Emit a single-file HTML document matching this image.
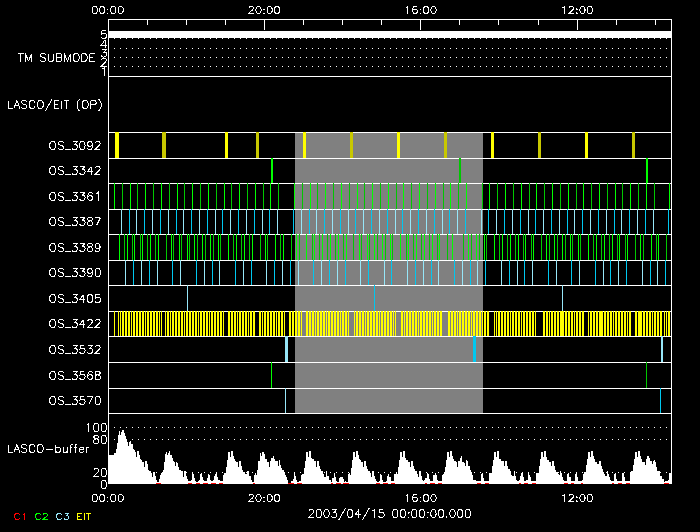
<!DOCTYPE html>
<html><head><meta charset="utf-8"><style>html,body{margin:0;padding:0;background:#000;width:700px;height:532px;overflow:hidden}svg{display:block}</style></head>
<body><svg width="700" height="532" viewBox="0 0 700 532" shape-rendering="crispEdges"><rect width="700" height="532" fill="#000"/><rect x="295" y="133" width="188" height="280" fill="#808080"/><rect x="108" y="31" width="564" height="7" fill="#ffffff"/><rect x="108" y="19" width="564" height="1" fill="#ffffff"/><rect x="108" y="76" width="564" height="1" fill="#ffffff"/><rect x="108" y="132" width="564" height="1" fill="#ffffff"/><rect x="108" y="158" width="564" height="1" fill="#ffffff"/><rect x="108" y="183" width="564" height="1" fill="#ffffff"/><rect x="108" y="209" width="564" height="1" fill="#ffffff"/><rect x="108" y="234" width="564" height="1" fill="#ffffff"/><rect x="108" y="260" width="564" height="1" fill="#ffffff"/><rect x="108" y="285" width="564" height="1" fill="#ffffff"/><rect x="108" y="311" width="564" height="1" fill="#ffffff"/><rect x="108" y="336" width="564" height="1" fill="#ffffff"/><rect x="108" y="362" width="564" height="1" fill="#ffffff"/><rect x="108" y="388" width="564" height="1" fill="#ffffff"/><rect x="108" y="413" width="564" height="1" fill="#ffffff"/><rect x="108" y="19" width="1" height="465" fill="#ffffff"/><rect x="671" y="19" width="1" height="465" fill="#ffffff"/><rect x="147" y="20" width="1" height="5" fill="#ffffff"/><rect x="186" y="20" width="1" height="5" fill="#ffffff"/><rect x="225" y="20" width="1" height="5" fill="#ffffff"/><rect x="264" y="20" width="1" height="10" fill="#ffffff"/><rect x="303" y="20" width="1" height="5" fill="#ffffff"/><rect x="342" y="20" width="1" height="5" fill="#ffffff"/><rect x="381" y="20" width="1" height="5" fill="#ffffff"/><rect x="420" y="20" width="1" height="10" fill="#ffffff"/><rect x="459" y="20" width="1" height="5" fill="#ffffff"/><rect x="498" y="20" width="1" height="5" fill="#ffffff"/><rect x="538" y="20" width="1" height="5" fill="#ffffff"/><rect x="577" y="20" width="1" height="10" fill="#ffffff"/><rect x="616" y="20" width="1" height="5" fill="#ffffff"/><rect x="655" y="20" width="1" height="5" fill="#ffffff"/><rect x="114" y="38" width="1" height="1" fill="#ffffff"/><rect x="120" y="38" width="1" height="1" fill="#ffffff"/><rect x="126" y="38" width="1" height="1" fill="#ffffff"/><rect x="132" y="38" width="1" height="1" fill="#ffffff"/><rect x="138" y="38" width="1" height="1" fill="#ffffff"/><rect x="144" y="38" width="1" height="1" fill="#ffffff"/><rect x="150" y="38" width="1" height="1" fill="#ffffff"/><rect x="156" y="38" width="1" height="1" fill="#ffffff"/><rect x="162" y="38" width="1" height="1" fill="#ffffff"/><rect x="168" y="38" width="1" height="1" fill="#ffffff"/><rect x="174" y="38" width="1" height="1" fill="#ffffff"/><rect x="180" y="38" width="1" height="1" fill="#ffffff"/><rect x="186" y="38" width="1" height="1" fill="#ffffff"/><rect x="192" y="38" width="1" height="1" fill="#ffffff"/><rect x="198" y="38" width="1" height="1" fill="#ffffff"/><rect x="204" y="38" width="1" height="1" fill="#ffffff"/><rect x="210" y="38" width="1" height="1" fill="#ffffff"/><rect x="216" y="38" width="1" height="1" fill="#ffffff"/><rect x="222" y="38" width="1" height="1" fill="#ffffff"/><rect x="228" y="38" width="1" height="1" fill="#ffffff"/><rect x="234" y="38" width="1" height="1" fill="#ffffff"/><rect x="240" y="38" width="1" height="1" fill="#ffffff"/><rect x="246" y="38" width="1" height="1" fill="#ffffff"/><rect x="252" y="38" width="1" height="1" fill="#ffffff"/><rect x="258" y="38" width="1" height="1" fill="#ffffff"/><rect x="264" y="38" width="1" height="1" fill="#ffffff"/><rect x="270" y="38" width="1" height="1" fill="#ffffff"/><rect x="276" y="38" width="1" height="1" fill="#ffffff"/><rect x="282" y="38" width="1" height="1" fill="#ffffff"/><rect x="288" y="38" width="1" height="1" fill="#ffffff"/><rect x="294" y="38" width="1" height="1" fill="#ffffff"/><rect x="300" y="38" width="1" height="1" fill="#ffffff"/><rect x="306" y="38" width="1" height="1" fill="#ffffff"/><rect x="312" y="38" width="1" height="1" fill="#ffffff"/><rect x="318" y="38" width="1" height="1" fill="#ffffff"/><rect x="324" y="38" width="1" height="1" fill="#ffffff"/><rect x="330" y="38" width="1" height="1" fill="#ffffff"/><rect x="336" y="38" width="1" height="1" fill="#ffffff"/><rect x="342" y="38" width="1" height="1" fill="#ffffff"/><rect x="348" y="38" width="1" height="1" fill="#ffffff"/><rect x="354" y="38" width="1" height="1" fill="#ffffff"/><rect x="360" y="38" width="1" height="1" fill="#ffffff"/><rect x="366" y="38" width="1" height="1" fill="#ffffff"/><rect x="372" y="38" width="1" height="1" fill="#ffffff"/><rect x="378" y="38" width="1" height="1" fill="#ffffff"/><rect x="384" y="38" width="1" height="1" fill="#ffffff"/><rect x="390" y="38" width="1" height="1" fill="#ffffff"/><rect x="396" y="38" width="1" height="1" fill="#ffffff"/><rect x="402" y="38" width="1" height="1" fill="#ffffff"/><rect x="408" y="38" width="1" height="1" fill="#ffffff"/><rect x="414" y="38" width="1" height="1" fill="#ffffff"/><rect x="420" y="38" width="1" height="1" fill="#ffffff"/><rect x="426" y="38" width="1" height="1" fill="#ffffff"/><rect x="432" y="38" width="1" height="1" fill="#ffffff"/><rect x="438" y="38" width="1" height="1" fill="#ffffff"/><rect x="444" y="38" width="1" height="1" fill="#ffffff"/><rect x="450" y="38" width="1" height="1" fill="#ffffff"/><rect x="456" y="38" width="1" height="1" fill="#ffffff"/><rect x="462" y="38" width="1" height="1" fill="#ffffff"/><rect x="468" y="38" width="1" height="1" fill="#ffffff"/><rect x="474" y="38" width="1" height="1" fill="#ffffff"/><rect x="480" y="38" width="1" height="1" fill="#ffffff"/><rect x="486" y="38" width="1" height="1" fill="#ffffff"/><rect x="492" y="38" width="1" height="1" fill="#ffffff"/><rect x="498" y="38" width="1" height="1" fill="#ffffff"/><rect x="504" y="38" width="1" height="1" fill="#ffffff"/><rect x="510" y="38" width="1" height="1" fill="#ffffff"/><rect x="516" y="38" width="1" height="1" fill="#ffffff"/><rect x="522" y="38" width="1" height="1" fill="#ffffff"/><rect x="528" y="38" width="1" height="1" fill="#ffffff"/><rect x="534" y="38" width="1" height="1" fill="#ffffff"/><rect x="540" y="38" width="1" height="1" fill="#ffffff"/><rect x="546" y="38" width="1" height="1" fill="#ffffff"/><rect x="552" y="38" width="1" height="1" fill="#ffffff"/><rect x="558" y="38" width="1" height="1" fill="#ffffff"/><rect x="564" y="38" width="1" height="1" fill="#ffffff"/><rect x="570" y="38" width="1" height="1" fill="#ffffff"/><rect x="576" y="38" width="1" height="1" fill="#ffffff"/><rect x="582" y="38" width="1" height="1" fill="#ffffff"/><rect x="588" y="38" width="1" height="1" fill="#ffffff"/><rect x="594" y="38" width="1" height="1" fill="#ffffff"/><rect x="600" y="38" width="1" height="1" fill="#ffffff"/><rect x="606" y="38" width="1" height="1" fill="#ffffff"/><rect x="612" y="38" width="1" height="1" fill="#ffffff"/><rect x="618" y="38" width="1" height="1" fill="#ffffff"/><rect x="624" y="38" width="1" height="1" fill="#ffffff"/><rect x="630" y="38" width="1" height="1" fill="#ffffff"/><rect x="636" y="38" width="1" height="1" fill="#ffffff"/><rect x="642" y="38" width="1" height="1" fill="#ffffff"/><rect x="648" y="38" width="1" height="1" fill="#ffffff"/><rect x="654" y="38" width="1" height="1" fill="#ffffff"/><rect x="660" y="38" width="1" height="1" fill="#ffffff"/><rect x="666" y="38" width="1" height="1" fill="#ffffff"/><rect x="114" y="48" width="1" height="1" fill="#ffffff"/><rect x="120" y="48" width="1" height="1" fill="#ffffff"/><rect x="126" y="48" width="1" height="1" fill="#ffffff"/><rect x="132" y="48" width="1" height="1" fill="#ffffff"/><rect x="138" y="48" width="1" height="1" fill="#ffffff"/><rect x="144" y="48" width="1" height="1" fill="#ffffff"/><rect x="150" y="48" width="1" height="1" fill="#ffffff"/><rect x="156" y="48" width="1" height="1" fill="#ffffff"/><rect x="162" y="48" width="1" height="1" fill="#ffffff"/><rect x="168" y="48" width="1" height="1" fill="#ffffff"/><rect x="174" y="48" width="1" height="1" fill="#ffffff"/><rect x="180" y="48" width="1" height="1" fill="#ffffff"/><rect x="186" y="48" width="1" height="1" fill="#ffffff"/><rect x="192" y="48" width="1" height="1" fill="#ffffff"/><rect x="198" y="48" width="1" height="1" fill="#ffffff"/><rect x="204" y="48" width="1" height="1" fill="#ffffff"/><rect x="210" y="48" width="1" height="1" fill="#ffffff"/><rect x="216" y="48" width="1" height="1" fill="#ffffff"/><rect x="222" y="48" width="1" height="1" fill="#ffffff"/><rect x="228" y="48" width="1" height="1" fill="#ffffff"/><rect x="234" y="48" width="1" height="1" fill="#ffffff"/><rect x="240" y="48" width="1" height="1" fill="#ffffff"/><rect x="246" y="48" width="1" height="1" fill="#ffffff"/><rect x="252" y="48" width="1" height="1" fill="#ffffff"/><rect x="258" y="48" width="1" height="1" fill="#ffffff"/><rect x="264" y="48" width="1" height="1" fill="#ffffff"/><rect x="270" y="48" width="1" height="1" fill="#ffffff"/><rect x="276" y="48" width="1" height="1" fill="#ffffff"/><rect x="282" y="48" width="1" height="1" fill="#ffffff"/><rect x="288" y="48" width="1" height="1" fill="#ffffff"/><rect x="294" y="48" width="1" height="1" fill="#ffffff"/><rect x="300" y="48" width="1" height="1" fill="#ffffff"/><rect x="306" y="48" width="1" height="1" fill="#ffffff"/><rect x="312" y="48" width="1" height="1" fill="#ffffff"/><rect x="318" y="48" width="1" height="1" fill="#ffffff"/><rect x="324" y="48" width="1" height="1" fill="#ffffff"/><rect x="330" y="48" width="1" height="1" fill="#ffffff"/><rect x="336" y="48" width="1" height="1" fill="#ffffff"/><rect x="342" y="48" width="1" height="1" fill="#ffffff"/><rect x="348" y="48" width="1" height="1" fill="#ffffff"/><rect x="354" y="48" width="1" height="1" fill="#ffffff"/><rect x="360" y="48" width="1" height="1" fill="#ffffff"/><rect x="366" y="48" width="1" height="1" fill="#ffffff"/><rect x="372" y="48" width="1" height="1" fill="#ffffff"/><rect x="378" y="48" width="1" height="1" fill="#ffffff"/><rect x="384" y="48" width="1" height="1" fill="#ffffff"/><rect x="390" y="48" width="1" height="1" fill="#ffffff"/><rect x="396" y="48" width="1" height="1" fill="#ffffff"/><rect x="402" y="48" width="1" height="1" fill="#ffffff"/><rect x="408" y="48" width="1" height="1" fill="#ffffff"/><rect x="414" y="48" width="1" height="1" fill="#ffffff"/><rect x="420" y="48" width="1" height="1" fill="#ffffff"/><rect x="426" y="48" width="1" height="1" fill="#ffffff"/><rect x="432" y="48" width="1" height="1" fill="#ffffff"/><rect x="438" y="48" width="1" height="1" fill="#ffffff"/><rect x="444" y="48" width="1" height="1" fill="#ffffff"/><rect x="450" y="48" width="1" height="1" fill="#ffffff"/><rect x="456" y="48" width="1" height="1" fill="#ffffff"/><rect x="462" y="48" width="1" height="1" fill="#ffffff"/><rect x="468" y="48" width="1" height="1" fill="#ffffff"/><rect x="474" y="48" width="1" height="1" fill="#ffffff"/><rect x="480" y="48" width="1" height="1" fill="#ffffff"/><rect x="486" y="48" width="1" height="1" fill="#ffffff"/><rect x="492" y="48" width="1" height="1" fill="#ffffff"/><rect x="498" y="48" width="1" height="1" fill="#ffffff"/><rect x="504" y="48" width="1" height="1" fill="#ffffff"/><rect x="510" y="48" width="1" height="1" fill="#ffffff"/><rect x="516" y="48" width="1" height="1" fill="#ffffff"/><rect x="522" y="48" width="1" height="1" fill="#ffffff"/><rect x="528" y="48" width="1" height="1" fill="#ffffff"/><rect x="534" y="48" width="1" height="1" fill="#ffffff"/><rect x="540" y="48" width="1" height="1" fill="#ffffff"/><rect x="546" y="48" width="1" height="1" fill="#ffffff"/><rect x="552" y="48" width="1" height="1" fill="#ffffff"/><rect x="558" y="48" width="1" height="1" fill="#ffffff"/><rect x="564" y="48" width="1" height="1" fill="#ffffff"/><rect x="570" y="48" width="1" height="1" fill="#ffffff"/><rect x="576" y="48" width="1" height="1" fill="#ffffff"/><rect x="582" y="48" width="1" height="1" fill="#ffffff"/><rect x="588" y="48" width="1" height="1" fill="#ffffff"/><rect x="594" y="48" width="1" height="1" fill="#ffffff"/><rect x="600" y="48" width="1" height="1" fill="#ffffff"/><rect x="606" y="48" width="1" height="1" fill="#ffffff"/><rect x="612" y="48" width="1" height="1" fill="#ffffff"/><rect x="618" y="48" width="1" height="1" fill="#ffffff"/><rect x="624" y="48" width="1" height="1" fill="#ffffff"/><rect x="630" y="48" width="1" height="1" fill="#ffffff"/><rect x="636" y="48" width="1" height="1" fill="#ffffff"/><rect x="642" y="48" width="1" height="1" fill="#ffffff"/><rect x="648" y="48" width="1" height="1" fill="#ffffff"/><rect x="654" y="48" width="1" height="1" fill="#ffffff"/><rect x="660" y="48" width="1" height="1" fill="#ffffff"/><rect x="666" y="48" width="1" height="1" fill="#ffffff"/><rect x="114" y="57" width="1" height="1" fill="#ffffff"/><rect x="120" y="57" width="1" height="1" fill="#ffffff"/><rect x="126" y="57" width="1" height="1" fill="#ffffff"/><rect x="132" y="57" width="1" height="1" fill="#ffffff"/><rect x="138" y="57" width="1" height="1" fill="#ffffff"/><rect x="144" y="57" width="1" height="1" fill="#ffffff"/><rect x="150" y="57" width="1" height="1" fill="#ffffff"/><rect x="156" y="57" width="1" height="1" fill="#ffffff"/><rect x="162" y="57" width="1" height="1" fill="#ffffff"/><rect x="168" y="57" width="1" height="1" fill="#ffffff"/><rect x="174" y="57" width="1" height="1" fill="#ffffff"/><rect x="180" y="57" width="1" height="1" fill="#ffffff"/><rect x="186" y="57" width="1" height="1" fill="#ffffff"/><rect x="192" y="57" width="1" height="1" fill="#ffffff"/><rect x="198" y="57" width="1" height="1" fill="#ffffff"/><rect x="204" y="57" width="1" height="1" fill="#ffffff"/><rect x="210" y="57" width="1" height="1" fill="#ffffff"/><rect x="216" y="57" width="1" height="1" fill="#ffffff"/><rect x="222" y="57" width="1" height="1" fill="#ffffff"/><rect x="228" y="57" width="1" height="1" fill="#ffffff"/><rect x="234" y="57" width="1" height="1" fill="#ffffff"/><rect x="240" y="57" width="1" height="1" fill="#ffffff"/><rect x="246" y="57" width="1" height="1" fill="#ffffff"/><rect x="252" y="57" width="1" height="1" fill="#ffffff"/><rect x="258" y="57" width="1" height="1" fill="#ffffff"/><rect x="264" y="57" width="1" height="1" fill="#ffffff"/><rect x="270" y="57" width="1" height="1" fill="#ffffff"/><rect x="276" y="57" width="1" height="1" fill="#ffffff"/><rect x="282" y="57" width="1" height="1" fill="#ffffff"/><rect x="288" y="57" width="1" height="1" fill="#ffffff"/><rect x="294" y="57" width="1" height="1" fill="#ffffff"/><rect x="300" y="57" width="1" height="1" fill="#ffffff"/><rect x="306" y="57" width="1" height="1" fill="#ffffff"/><rect x="312" y="57" width="1" height="1" fill="#ffffff"/><rect x="318" y="57" width="1" height="1" fill="#ffffff"/><rect x="324" y="57" width="1" height="1" fill="#ffffff"/><rect x="330" y="57" width="1" height="1" fill="#ffffff"/><rect x="336" y="57" width="1" height="1" fill="#ffffff"/><rect x="342" y="57" width="1" height="1" fill="#ffffff"/><rect x="348" y="57" width="1" height="1" fill="#ffffff"/><rect x="354" y="57" width="1" height="1" fill="#ffffff"/><rect x="360" y="57" width="1" height="1" fill="#ffffff"/><rect x="366" y="57" width="1" height="1" fill="#ffffff"/><rect x="372" y="57" width="1" height="1" fill="#ffffff"/><rect x="378" y="57" width="1" height="1" fill="#ffffff"/><rect x="384" y="57" width="1" height="1" fill="#ffffff"/><rect x="390" y="57" width="1" height="1" fill="#ffffff"/><rect x="396" y="57" width="1" height="1" fill="#ffffff"/><rect x="402" y="57" width="1" height="1" fill="#ffffff"/><rect x="408" y="57" width="1" height="1" fill="#ffffff"/><rect x="414" y="57" width="1" height="1" fill="#ffffff"/><rect x="420" y="57" width="1" height="1" fill="#ffffff"/><rect x="426" y="57" width="1" height="1" fill="#ffffff"/><rect x="432" y="57" width="1" height="1" fill="#ffffff"/><rect x="438" y="57" width="1" height="1" fill="#ffffff"/><rect x="444" y="57" width="1" height="1" fill="#ffffff"/><rect x="450" y="57" width="1" height="1" fill="#ffffff"/><rect x="456" y="57" width="1" height="1" fill="#ffffff"/><rect x="462" y="57" width="1" height="1" fill="#ffffff"/><rect x="468" y="57" width="1" height="1" fill="#ffffff"/><rect x="474" y="57" width="1" height="1" fill="#ffffff"/><rect x="480" y="57" width="1" height="1" fill="#ffffff"/><rect x="486" y="57" width="1" height="1" fill="#ffffff"/><rect x="492" y="57" width="1" height="1" fill="#ffffff"/><rect x="498" y="57" width="1" height="1" fill="#ffffff"/><rect x="504" y="57" width="1" height="1" fill="#ffffff"/><rect x="510" y="57" width="1" height="1" fill="#ffffff"/><rect x="516" y="57" width="1" height="1" fill="#ffffff"/><rect x="522" y="57" width="1" height="1" fill="#ffffff"/><rect x="528" y="57" width="1" height="1" fill="#ffffff"/><rect x="534" y="57" width="1" height="1" fill="#ffffff"/><rect x="540" y="57" width="1" height="1" fill="#ffffff"/><rect x="546" y="57" width="1" height="1" fill="#ffffff"/><rect x="552" y="57" width="1" height="1" fill="#ffffff"/><rect x="558" y="57" width="1" height="1" fill="#ffffff"/><rect x="564" y="57" width="1" height="1" fill="#ffffff"/><rect x="570" y="57" width="1" height="1" fill="#ffffff"/><rect x="576" y="57" width="1" height="1" fill="#ffffff"/><rect x="582" y="57" width="1" height="1" fill="#ffffff"/><rect x="588" y="57" width="1" height="1" fill="#ffffff"/><rect x="594" y="57" width="1" height="1" fill="#ffffff"/><rect x="600" y="57" width="1" height="1" fill="#ffffff"/><rect x="606" y="57" width="1" height="1" fill="#ffffff"/><rect x="612" y="57" width="1" height="1" fill="#ffffff"/><rect x="618" y="57" width="1" height="1" fill="#ffffff"/><rect x="624" y="57" width="1" height="1" fill="#ffffff"/><rect x="630" y="57" width="1" height="1" fill="#ffffff"/><rect x="636" y="57" width="1" height="1" fill="#ffffff"/><rect x="642" y="57" width="1" height="1" fill="#ffffff"/><rect x="648" y="57" width="1" height="1" fill="#ffffff"/><rect x="654" y="57" width="1" height="1" fill="#ffffff"/><rect x="660" y="57" width="1" height="1" fill="#ffffff"/><rect x="666" y="57" width="1" height="1" fill="#ffffff"/><rect x="114" y="66" width="1" height="1" fill="#ffffff"/><rect x="120" y="66" width="1" height="1" fill="#ffffff"/><rect x="126" y="66" width="1" height="1" fill="#ffffff"/><rect x="132" y="66" width="1" height="1" fill="#ffffff"/><rect x="138" y="66" width="1" height="1" fill="#ffffff"/><rect x="144" y="66" width="1" height="1" fill="#ffffff"/><rect x="150" y="66" width="1" height="1" fill="#ffffff"/><rect x="156" y="66" width="1" height="1" fill="#ffffff"/><rect x="162" y="66" width="1" height="1" fill="#ffffff"/><rect x="168" y="66" width="1" height="1" fill="#ffffff"/><rect x="174" y="66" width="1" height="1" fill="#ffffff"/><rect x="180" y="66" width="1" height="1" fill="#ffffff"/><rect x="186" y="66" width="1" height="1" fill="#ffffff"/><rect x="192" y="66" width="1" height="1" fill="#ffffff"/><rect x="198" y="66" width="1" height="1" fill="#ffffff"/><rect x="204" y="66" width="1" height="1" fill="#ffffff"/><rect x="210" y="66" width="1" height="1" fill="#ffffff"/><rect x="216" y="66" width="1" height="1" fill="#ffffff"/><rect x="222" y="66" width="1" height="1" fill="#ffffff"/><rect x="228" y="66" width="1" height="1" fill="#ffffff"/><rect x="234" y="66" width="1" height="1" fill="#ffffff"/><rect x="240" y="66" width="1" height="1" fill="#ffffff"/><rect x="246" y="66" width="1" height="1" fill="#ffffff"/><rect x="252" y="66" width="1" height="1" fill="#ffffff"/><rect x="258" y="66" width="1" height="1" fill="#ffffff"/><rect x="264" y="66" width="1" height="1" fill="#ffffff"/><rect x="270" y="66" width="1" height="1" fill="#ffffff"/><rect x="276" y="66" width="1" height="1" fill="#ffffff"/><rect x="282" y="66" width="1" height="1" fill="#ffffff"/><rect x="288" y="66" width="1" height="1" fill="#ffffff"/><rect x="294" y="66" width="1" height="1" fill="#ffffff"/><rect x="300" y="66" width="1" height="1" fill="#ffffff"/><rect x="306" y="66" width="1" height="1" fill="#ffffff"/><rect x="312" y="66" width="1" height="1" fill="#ffffff"/><rect x="318" y="66" width="1" height="1" fill="#ffffff"/><rect x="324" y="66" width="1" height="1" fill="#ffffff"/><rect x="330" y="66" width="1" height="1" fill="#ffffff"/><rect x="336" y="66" width="1" height="1" fill="#ffffff"/><rect x="342" y="66" width="1" height="1" fill="#ffffff"/><rect x="348" y="66" width="1" height="1" fill="#ffffff"/><rect x="354" y="66" width="1" height="1" fill="#ffffff"/><rect x="360" y="66" width="1" height="1" fill="#ffffff"/><rect x="366" y="66" width="1" height="1" fill="#ffffff"/><rect x="372" y="66" width="1" height="1" fill="#ffffff"/><rect x="378" y="66" width="1" height="1" fill="#ffffff"/><rect x="384" y="66" width="1" height="1" fill="#ffffff"/><rect x="390" y="66" width="1" height="1" fill="#ffffff"/><rect x="396" y="66" width="1" height="1" fill="#ffffff"/><rect x="402" y="66" width="1" height="1" fill="#ffffff"/><rect x="408" y="66" width="1" height="1" fill="#ffffff"/><rect x="414" y="66" width="1" height="1" fill="#ffffff"/><rect x="420" y="66" width="1" height="1" fill="#ffffff"/><rect x="426" y="66" width="1" height="1" fill="#ffffff"/><rect x="432" y="66" width="1" height="1" fill="#ffffff"/><rect x="438" y="66" width="1" height="1" fill="#ffffff"/><rect x="444" y="66" width="1" height="1" fill="#ffffff"/><rect x="450" y="66" width="1" height="1" fill="#ffffff"/><rect x="456" y="66" width="1" height="1" fill="#ffffff"/><rect x="462" y="66" width="1" height="1" fill="#ffffff"/><rect x="468" y="66" width="1" height="1" fill="#ffffff"/><rect x="474" y="66" width="1" height="1" fill="#ffffff"/><rect x="480" y="66" width="1" height="1" fill="#ffffff"/><rect x="486" y="66" width="1" height="1" fill="#ffffff"/><rect x="492" y="66" width="1" height="1" fill="#ffffff"/><rect x="498" y="66" width="1" height="1" fill="#ffffff"/><rect x="504" y="66" width="1" height="1" fill="#ffffff"/><rect x="510" y="66" width="1" height="1" fill="#ffffff"/><rect x="516" y="66" width="1" height="1" fill="#ffffff"/><rect x="522" y="66" width="1" height="1" fill="#ffffff"/><rect x="528" y="66" width="1" height="1" fill="#ffffff"/><rect x="534" y="66" width="1" height="1" fill="#ffffff"/><rect x="540" y="66" width="1" height="1" fill="#ffffff"/><rect x="546" y="66" width="1" height="1" fill="#ffffff"/><rect x="552" y="66" width="1" height="1" fill="#ffffff"/><rect x="558" y="66" width="1" height="1" fill="#ffffff"/><rect x="564" y="66" width="1" height="1" fill="#ffffff"/><rect x="570" y="66" width="1" height="1" fill="#ffffff"/><rect x="576" y="66" width="1" height="1" fill="#ffffff"/><rect x="582" y="66" width="1" height="1" fill="#ffffff"/><rect x="588" y="66" width="1" height="1" fill="#ffffff"/><rect x="594" y="66" width="1" height="1" fill="#ffffff"/><rect x="600" y="66" width="1" height="1" fill="#ffffff"/><rect x="606" y="66" width="1" height="1" fill="#ffffff"/><rect x="612" y="66" width="1" height="1" fill="#ffffff"/><rect x="618" y="66" width="1" height="1" fill="#ffffff"/><rect x="624" y="66" width="1" height="1" fill="#ffffff"/><rect x="630" y="66" width="1" height="1" fill="#ffffff"/><rect x="636" y="66" width="1" height="1" fill="#ffffff"/><rect x="642" y="66" width="1" height="1" fill="#ffffff"/><rect x="648" y="66" width="1" height="1" fill="#ffffff"/><rect x="654" y="66" width="1" height="1" fill="#ffffff"/><rect x="660" y="66" width="1" height="1" fill="#ffffff"/><rect x="666" y="66" width="1" height="1" fill="#ffffff"/><rect x="114" y="427" width="1" height="1" fill="#ffffff"/><rect x="120" y="427" width="1" height="1" fill="#ffffff"/><rect x="126" y="427" width="1" height="1" fill="#ffffff"/><rect x="132" y="427" width="1" height="1" fill="#ffffff"/><rect x="138" y="427" width="1" height="1" fill="#ffffff"/><rect x="144" y="427" width="1" height="1" fill="#ffffff"/><rect x="150" y="427" width="1" height="1" fill="#ffffff"/><rect x="156" y="427" width="1" height="1" fill="#ffffff"/><rect x="162" y="427" width="1" height="1" fill="#ffffff"/><rect x="168" y="427" width="1" height="1" fill="#ffffff"/><rect x="174" y="427" width="1" height="1" fill="#ffffff"/><rect x="180" y="427" width="1" height="1" fill="#ffffff"/><rect x="186" y="427" width="1" height="1" fill="#ffffff"/><rect x="192" y="427" width="1" height="1" fill="#ffffff"/><rect x="198" y="427" width="1" height="1" fill="#ffffff"/><rect x="204" y="427" width="1" height="1" fill="#ffffff"/><rect x="210" y="427" width="1" height="1" fill="#ffffff"/><rect x="216" y="427" width="1" height="1" fill="#ffffff"/><rect x="222" y="427" width="1" height="1" fill="#ffffff"/><rect x="228" y="427" width="1" height="1" fill="#ffffff"/><rect x="234" y="427" width="1" height="1" fill="#ffffff"/><rect x="240" y="427" width="1" height="1" fill="#ffffff"/><rect x="246" y="427" width="1" height="1" fill="#ffffff"/><rect x="252" y="427" width="1" height="1" fill="#ffffff"/><rect x="258" y="427" width="1" height="1" fill="#ffffff"/><rect x="264" y="427" width="1" height="1" fill="#ffffff"/><rect x="270" y="427" width="1" height="1" fill="#ffffff"/><rect x="276" y="427" width="1" height="1" fill="#ffffff"/><rect x="282" y="427" width="1" height="1" fill="#ffffff"/><rect x="288" y="427" width="1" height="1" fill="#ffffff"/><rect x="294" y="427" width="1" height="1" fill="#ffffff"/><rect x="300" y="427" width="1" height="1" fill="#ffffff"/><rect x="306" y="427" width="1" height="1" fill="#ffffff"/><rect x="312" y="427" width="1" height="1" fill="#ffffff"/><rect x="318" y="427" width="1" height="1" fill="#ffffff"/><rect x="324" y="427" width="1" height="1" fill="#ffffff"/><rect x="330" y="427" width="1" height="1" fill="#ffffff"/><rect x="336" y="427" width="1" height="1" fill="#ffffff"/><rect x="342" y="427" width="1" height="1" fill="#ffffff"/><rect x="348" y="427" width="1" height="1" fill="#ffffff"/><rect x="354" y="427" width="1" height="1" fill="#ffffff"/><rect x="360" y="427" width="1" height="1" fill="#ffffff"/><rect x="366" y="427" width="1" height="1" fill="#ffffff"/><rect x="372" y="427" width="1" height="1" fill="#ffffff"/><rect x="378" y="427" width="1" height="1" fill="#ffffff"/><rect x="384" y="427" width="1" height="1" fill="#ffffff"/><rect x="390" y="427" width="1" height="1" fill="#ffffff"/><rect x="396" y="427" width="1" height="1" fill="#ffffff"/><rect x="402" y="427" width="1" height="1" fill="#ffffff"/><rect x="408" y="427" width="1" height="1" fill="#ffffff"/><rect x="414" y="427" width="1" height="1" fill="#ffffff"/><rect x="420" y="427" width="1" height="1" fill="#ffffff"/><rect x="426" y="427" width="1" height="1" fill="#ffffff"/><rect x="432" y="427" width="1" height="1" fill="#ffffff"/><rect x="438" y="427" width="1" height="1" fill="#ffffff"/><rect x="444" y="427" width="1" height="1" fill="#ffffff"/><rect x="450" y="427" width="1" height="1" fill="#ffffff"/><rect x="456" y="427" width="1" height="1" fill="#ffffff"/><rect x="462" y="427" width="1" height="1" fill="#ffffff"/><rect x="468" y="427" width="1" height="1" fill="#ffffff"/><rect x="474" y="427" width="1" height="1" fill="#ffffff"/><rect x="480" y="427" width="1" height="1" fill="#ffffff"/><rect x="486" y="427" width="1" height="1" fill="#ffffff"/><rect x="492" y="427" width="1" height="1" fill="#ffffff"/><rect x="498" y="427" width="1" height="1" fill="#ffffff"/><rect x="504" y="427" width="1" height="1" fill="#ffffff"/><rect x="510" y="427" width="1" height="1" fill="#ffffff"/><rect x="516" y="427" width="1" height="1" fill="#ffffff"/><rect x="522" y="427" width="1" height="1" fill="#ffffff"/><rect x="528" y="427" width="1" height="1" fill="#ffffff"/><rect x="534" y="427" width="1" height="1" fill="#ffffff"/><rect x="540" y="427" width="1" height="1" fill="#ffffff"/><rect x="546" y="427" width="1" height="1" fill="#ffffff"/><rect x="552" y="427" width="1" height="1" fill="#ffffff"/><rect x="558" y="427" width="1" height="1" fill="#ffffff"/><rect x="564" y="427" width="1" height="1" fill="#ffffff"/><rect x="570" y="427" width="1" height="1" fill="#ffffff"/><rect x="576" y="427" width="1" height="1" fill="#ffffff"/><rect x="582" y="427" width="1" height="1" fill="#ffffff"/><rect x="588" y="427" width="1" height="1" fill="#ffffff"/><rect x="594" y="427" width="1" height="1" fill="#ffffff"/><rect x="600" y="427" width="1" height="1" fill="#ffffff"/><rect x="606" y="427" width="1" height="1" fill="#ffffff"/><rect x="612" y="427" width="1" height="1" fill="#ffffff"/><rect x="618" y="427" width="1" height="1" fill="#ffffff"/><rect x="624" y="427" width="1" height="1" fill="#ffffff"/><rect x="630" y="427" width="1" height="1" fill="#ffffff"/><rect x="636" y="427" width="1" height="1" fill="#ffffff"/><rect x="642" y="427" width="1" height="1" fill="#ffffff"/><rect x="648" y="427" width="1" height="1" fill="#ffffff"/><rect x="654" y="427" width="1" height="1" fill="#ffffff"/><rect x="660" y="427" width="1" height="1" fill="#ffffff"/><rect x="666" y="427" width="1" height="1" fill="#ffffff"/><rect x="114" y="439" width="1" height="1" fill="#ffffff"/><rect x="120" y="439" width="1" height="1" fill="#ffffff"/><rect x="126" y="439" width="1" height="1" fill="#ffffff"/><rect x="132" y="439" width="1" height="1" fill="#ffffff"/><rect x="138" y="439" width="1" height="1" fill="#ffffff"/><rect x="144" y="439" width="1" height="1" fill="#ffffff"/><rect x="150" y="439" width="1" height="1" fill="#ffffff"/><rect x="156" y="439" width="1" height="1" fill="#ffffff"/><rect x="162" y="439" width="1" height="1" fill="#ffffff"/><rect x="168" y="439" width="1" height="1" fill="#ffffff"/><rect x="174" y="439" width="1" height="1" fill="#ffffff"/><rect x="180" y="439" width="1" height="1" fill="#ffffff"/><rect x="186" y="439" width="1" height="1" fill="#ffffff"/><rect x="192" y="439" width="1" height="1" fill="#ffffff"/><rect x="198" y="439" width="1" height="1" fill="#ffffff"/><rect x="204" y="439" width="1" height="1" fill="#ffffff"/><rect x="210" y="439" width="1" height="1" fill="#ffffff"/><rect x="216" y="439" width="1" height="1" fill="#ffffff"/><rect x="222" y="439" width="1" height="1" fill="#ffffff"/><rect x="228" y="439" width="1" height="1" fill="#ffffff"/><rect x="234" y="439" width="1" height="1" fill="#ffffff"/><rect x="240" y="439" width="1" height="1" fill="#ffffff"/><rect x="246" y="439" width="1" height="1" fill="#ffffff"/><rect x="252" y="439" width="1" height="1" fill="#ffffff"/><rect x="258" y="439" width="1" height="1" fill="#ffffff"/><rect x="264" y="439" width="1" height="1" fill="#ffffff"/><rect x="270" y="439" width="1" height="1" fill="#ffffff"/><rect x="276" y="439" width="1" height="1" fill="#ffffff"/><rect x="282" y="439" width="1" height="1" fill="#ffffff"/><rect x="288" y="439" width="1" height="1" fill="#ffffff"/><rect x="294" y="439" width="1" height="1" fill="#ffffff"/><rect x="300" y="439" width="1" height="1" fill="#ffffff"/><rect x="306" y="439" width="1" height="1" fill="#ffffff"/><rect x="312" y="439" width="1" height="1" fill="#ffffff"/><rect x="318" y="439" width="1" height="1" fill="#ffffff"/><rect x="324" y="439" width="1" height="1" fill="#ffffff"/><rect x="330" y="439" width="1" height="1" fill="#ffffff"/><rect x="336" y="439" width="1" height="1" fill="#ffffff"/><rect x="342" y="439" width="1" height="1" fill="#ffffff"/><rect x="348" y="439" width="1" height="1" fill="#ffffff"/><rect x="354" y="439" width="1" height="1" fill="#ffffff"/><rect x="360" y="439" width="1" height="1" fill="#ffffff"/><rect x="366" y="439" width="1" height="1" fill="#ffffff"/><rect x="372" y="439" width="1" height="1" fill="#ffffff"/><rect x="378" y="439" width="1" height="1" fill="#ffffff"/><rect x="384" y="439" width="1" height="1" fill="#ffffff"/><rect x="390" y="439" width="1" height="1" fill="#ffffff"/><rect x="396" y="439" width="1" height="1" fill="#ffffff"/><rect x="402" y="439" width="1" height="1" fill="#ffffff"/><rect x="408" y="439" width="1" height="1" fill="#ffffff"/><rect x="414" y="439" width="1" height="1" fill="#ffffff"/><rect x="420" y="439" width="1" height="1" fill="#ffffff"/><rect x="426" y="439" width="1" height="1" fill="#ffffff"/><rect x="432" y="439" width="1" height="1" fill="#ffffff"/><rect x="438" y="439" width="1" height="1" fill="#ffffff"/><rect x="444" y="439" width="1" height="1" fill="#ffffff"/><rect x="450" y="439" width="1" height="1" fill="#ffffff"/><rect x="456" y="439" width="1" height="1" fill="#ffffff"/><rect x="462" y="439" width="1" height="1" fill="#ffffff"/><rect x="468" y="439" width="1" height="1" fill="#ffffff"/><rect x="474" y="439" width="1" height="1" fill="#ffffff"/><rect x="480" y="439" width="1" height="1" fill="#ffffff"/><rect x="486" y="439" width="1" height="1" fill="#ffffff"/><rect x="492" y="439" width="1" height="1" fill="#ffffff"/><rect x="498" y="439" width="1" height="1" fill="#ffffff"/><rect x="504" y="439" width="1" height="1" fill="#ffffff"/><rect x="510" y="439" width="1" height="1" fill="#ffffff"/><rect x="516" y="439" width="1" height="1" fill="#ffffff"/><rect x="522" y="439" width="1" height="1" fill="#ffffff"/><rect x="528" y="439" width="1" height="1" fill="#ffffff"/><rect x="534" y="439" width="1" height="1" fill="#ffffff"/><rect x="540" y="439" width="1" height="1" fill="#ffffff"/><rect x="546" y="439" width="1" height="1" fill="#ffffff"/><rect x="552" y="439" width="1" height="1" fill="#ffffff"/><rect x="558" y="439" width="1" height="1" fill="#ffffff"/><rect x="564" y="439" width="1" height="1" fill="#ffffff"/><rect x="570" y="439" width="1" height="1" fill="#ffffff"/><rect x="576" y="439" width="1" height="1" fill="#ffffff"/><rect x="582" y="439" width="1" height="1" fill="#ffffff"/><rect x="588" y="439" width="1" height="1" fill="#ffffff"/><rect x="594" y="439" width="1" height="1" fill="#ffffff"/><rect x="600" y="439" width="1" height="1" fill="#ffffff"/><rect x="606" y="439" width="1" height="1" fill="#ffffff"/><rect x="612" y="439" width="1" height="1" fill="#ffffff"/><rect x="618" y="439" width="1" height="1" fill="#ffffff"/><rect x="624" y="439" width="1" height="1" fill="#ffffff"/><rect x="630" y="439" width="1" height="1" fill="#ffffff"/><rect x="636" y="439" width="1" height="1" fill="#ffffff"/><rect x="642" y="439" width="1" height="1" fill="#ffffff"/><rect x="648" y="439" width="1" height="1" fill="#ffffff"/><rect x="654" y="439" width="1" height="1" fill="#ffffff"/><rect x="660" y="439" width="1" height="1" fill="#ffffff"/><rect x="666" y="439" width="1" height="1" fill="#ffffff"/><rect x="114" y="472" width="1" height="1" fill="#ffffff"/><rect x="120" y="472" width="1" height="1" fill="#ffffff"/><rect x="126" y="472" width="1" height="1" fill="#ffffff"/><rect x="132" y="472" width="1" height="1" fill="#ffffff"/><rect x="138" y="472" width="1" height="1" fill="#ffffff"/><rect x="144" y="472" width="1" height="1" fill="#ffffff"/><rect x="150" y="472" width="1" height="1" fill="#ffffff"/><rect x="156" y="472" width="1" height="1" fill="#ffffff"/><rect x="162" y="472" width="1" height="1" fill="#ffffff"/><rect x="168" y="472" width="1" height="1" fill="#ffffff"/><rect x="174" y="472" width="1" height="1" fill="#ffffff"/><rect x="180" y="472" width="1" height="1" fill="#ffffff"/><rect x="186" y="472" width="1" height="1" fill="#ffffff"/><rect x="192" y="472" width="1" height="1" fill="#ffffff"/><rect x="198" y="472" width="1" height="1" fill="#ffffff"/><rect x="204" y="472" width="1" height="1" fill="#ffffff"/><rect x="210" y="472" width="1" height="1" fill="#ffffff"/><rect x="216" y="472" width="1" height="1" fill="#ffffff"/><rect x="222" y="472" width="1" height="1" fill="#ffffff"/><rect x="228" y="472" width="1" height="1" fill="#ffffff"/><rect x="234" y="472" width="1" height="1" fill="#ffffff"/><rect x="240" y="472" width="1" height="1" fill="#ffffff"/><rect x="246" y="472" width="1" height="1" fill="#ffffff"/><rect x="252" y="472" width="1" height="1" fill="#ffffff"/><rect x="258" y="472" width="1" height="1" fill="#ffffff"/><rect x="264" y="472" width="1" height="1" fill="#ffffff"/><rect x="270" y="472" width="1" height="1" fill="#ffffff"/><rect x="276" y="472" width="1" height="1" fill="#ffffff"/><rect x="282" y="472" width="1" height="1" fill="#ffffff"/><rect x="288" y="472" width="1" height="1" fill="#ffffff"/><rect x="294" y="472" width="1" height="1" fill="#ffffff"/><rect x="300" y="472" width="1" height="1" fill="#ffffff"/><rect x="306" y="472" width="1" height="1" fill="#ffffff"/><rect x="312" y="472" width="1" height="1" fill="#ffffff"/><rect x="318" y="472" width="1" height="1" fill="#ffffff"/><rect x="324" y="472" width="1" height="1" fill="#ffffff"/><rect x="330" y="472" width="1" height="1" fill="#ffffff"/><rect x="336" y="472" width="1" height="1" fill="#ffffff"/><rect x="342" y="472" width="1" height="1" fill="#ffffff"/><rect x="348" y="472" width="1" height="1" fill="#ffffff"/><rect x="354" y="472" width="1" height="1" fill="#ffffff"/><rect x="360" y="472" width="1" height="1" fill="#ffffff"/><rect x="366" y="472" width="1" height="1" fill="#ffffff"/><rect x="372" y="472" width="1" height="1" fill="#ffffff"/><rect x="378" y="472" width="1" height="1" fill="#ffffff"/><rect x="384" y="472" width="1" height="1" fill="#ffffff"/><rect x="390" y="472" width="1" height="1" fill="#ffffff"/><rect x="396" y="472" width="1" height="1" fill="#ffffff"/><rect x="402" y="472" width="1" height="1" fill="#ffffff"/><rect x="408" y="472" width="1" height="1" fill="#ffffff"/><rect x="414" y="472" width="1" height="1" fill="#ffffff"/><rect x="420" y="472" width="1" height="1" fill="#ffffff"/><rect x="426" y="472" width="1" height="1" fill="#ffffff"/><rect x="432" y="472" width="1" height="1" fill="#ffffff"/><rect x="438" y="472" width="1" height="1" fill="#ffffff"/><rect x="444" y="472" width="1" height="1" fill="#ffffff"/><rect x="450" y="472" width="1" height="1" fill="#ffffff"/><rect x="456" y="472" width="1" height="1" fill="#ffffff"/><rect x="462" y="472" width="1" height="1" fill="#ffffff"/><rect x="468" y="472" width="1" height="1" fill="#ffffff"/><rect x="474" y="472" width="1" height="1" fill="#ffffff"/><rect x="480" y="472" width="1" height="1" fill="#ffffff"/><rect x="486" y="472" width="1" height="1" fill="#ffffff"/><rect x="492" y="472" width="1" height="1" fill="#ffffff"/><rect x="498" y="472" width="1" height="1" fill="#ffffff"/><rect x="504" y="472" width="1" height="1" fill="#ffffff"/><rect x="510" y="472" width="1" height="1" fill="#ffffff"/><rect x="516" y="472" width="1" height="1" fill="#ffffff"/><rect x="522" y="472" width="1" height="1" fill="#ffffff"/><rect x="528" y="472" width="1" height="1" fill="#ffffff"/><rect x="534" y="472" width="1" height="1" fill="#ffffff"/><rect x="540" y="472" width="1" height="1" fill="#ffffff"/><rect x="546" y="472" width="1" height="1" fill="#ffffff"/><rect x="552" y="472" width="1" height="1" fill="#ffffff"/><rect x="558" y="472" width="1" height="1" fill="#ffffff"/><rect x="564" y="472" width="1" height="1" fill="#ffffff"/><rect x="570" y="472" width="1" height="1" fill="#ffffff"/><rect x="576" y="472" width="1" height="1" fill="#ffffff"/><rect x="582" y="472" width="1" height="1" fill="#ffffff"/><rect x="588" y="472" width="1" height="1" fill="#ffffff"/><rect x="594" y="472" width="1" height="1" fill="#ffffff"/><rect x="600" y="472" width="1" height="1" fill="#ffffff"/><rect x="606" y="472" width="1" height="1" fill="#ffffff"/><rect x="612" y="472" width="1" height="1" fill="#ffffff"/><rect x="618" y="472" width="1" height="1" fill="#ffffff"/><rect x="624" y="472" width="1" height="1" fill="#ffffff"/><rect x="630" y="472" width="1" height="1" fill="#ffffff"/><rect x="636" y="472" width="1" height="1" fill="#ffffff"/><rect x="642" y="472" width="1" height="1" fill="#ffffff"/><rect x="648" y="472" width="1" height="1" fill="#ffffff"/><rect x="654" y="472" width="1" height="1" fill="#ffffff"/><rect x="660" y="472" width="1" height="1" fill="#ffffff"/><rect x="666" y="472" width="1" height="1" fill="#ffffff"/><rect x="115" y="132" width="4" height="26" fill="#ffff00"/><rect x="162" y="132" width="4" height="26" fill="#c8c800"/><rect x="225" y="132" width="3" height="26" fill="#ffff00"/><rect x="256" y="132" width="3" height="26" fill="#c8c800"/><rect x="303" y="132" width="3" height="26" fill="#ffff00"/><rect x="350" y="132" width="3" height="26" fill="#c8c800"/><rect x="397" y="132" width="3" height="26" fill="#ffff00"/><rect x="444" y="132" width="3" height="26" fill="#c8c800"/><rect x="491" y="132" width="3" height="26" fill="#ffff00"/><rect x="538" y="132" width="3" height="26" fill="#c8c800"/><rect x="585" y="132" width="3" height="26" fill="#ffff00"/><rect x="632" y="132" width="3" height="26" fill="#c8c800"/><rect x="271" y="158" width="2" height="25" fill="#00ff00"/><rect x="459" y="158" width="2" height="25" fill="#00c800"/><rect x="646" y="158" width="2" height="25" fill="#00ff00"/><rect x="114" y="183" width="1" height="26" fill="#00ff00"/><rect x="122" y="183" width="1" height="26" fill="#00c800"/><rect x="130" y="183" width="1" height="26" fill="#00ff00"/><rect x="137" y="183" width="1" height="26" fill="#00c800"/><rect x="145" y="183" width="1" height="26" fill="#00ff00"/><rect x="153" y="183" width="1" height="26" fill="#00c800"/><rect x="161" y="183" width="1" height="26" fill="#00ff00"/><rect x="169" y="183" width="1" height="26" fill="#00c800"/><rect x="177" y="183" width="1" height="26" fill="#00ff00"/><rect x="184" y="183" width="1" height="26" fill="#00c800"/><rect x="192" y="183" width="1" height="26" fill="#00ff00"/><rect x="200" y="183" width="1" height="26" fill="#00c800"/><rect x="208" y="183" width="1" height="26" fill="#00ff00"/><rect x="216" y="183" width="1" height="26" fill="#00c800"/><rect x="224" y="183" width="1" height="26" fill="#00ff00"/><rect x="231" y="183" width="1" height="26" fill="#00c800"/><rect x="239" y="183" width="1" height="26" fill="#00ff00"/><rect x="247" y="183" width="1" height="26" fill="#00c800"/><rect x="255" y="183" width="1" height="26" fill="#00ff00"/><rect x="263" y="183" width="1" height="26" fill="#00c800"/><rect x="270" y="183" width="1" height="26" fill="#00ff00"/><rect x="278" y="183" width="1" height="26" fill="#00c800"/><rect x="294" y="183" width="1" height="26" fill="#00ff00"/><rect x="302" y="183" width="1" height="26" fill="#00c800"/><rect x="310" y="183" width="1" height="26" fill="#00ff00"/><rect x="317" y="183" width="1" height="26" fill="#00c800"/><rect x="325" y="183" width="1" height="26" fill="#00ff00"/><rect x="333" y="183" width="1" height="26" fill="#00c800"/><rect x="341" y="183" width="1" height="26" fill="#00ff00"/><rect x="349" y="183" width="1" height="26" fill="#00c800"/><rect x="357" y="183" width="1" height="26" fill="#00ff00"/><rect x="364" y="183" width="1" height="26" fill="#00c800"/><rect x="372" y="183" width="1" height="26" fill="#00ff00"/><rect x="380" y="183" width="1" height="26" fill="#00c800"/><rect x="388" y="183" width="1" height="26" fill="#00ff00"/><rect x="396" y="183" width="1" height="26" fill="#00c800"/><rect x="403" y="183" width="1" height="26" fill="#00ff00"/><rect x="411" y="183" width="1" height="26" fill="#00c800"/><rect x="419" y="183" width="1" height="26" fill="#00ff00"/><rect x="427" y="183" width="1" height="26" fill="#00c800"/><rect x="435" y="183" width="1" height="26" fill="#00ff00"/><rect x="443" y="183" width="1" height="26" fill="#00c800"/><rect x="450" y="183" width="1" height="26" fill="#00ff00"/><rect x="458" y="183" width="1" height="26" fill="#00c800"/><rect x="466" y="183" width="1" height="26" fill="#00ff00"/><rect x="482" y="183" width="1" height="26" fill="#00c800"/><rect x="489" y="183" width="1" height="26" fill="#00ff00"/><rect x="497" y="183" width="1" height="26" fill="#00c800"/><rect x="505" y="183" width="1" height="26" fill="#00ff00"/><rect x="513" y="183" width="1" height="26" fill="#00c800"/><rect x="521" y="183" width="1" height="26" fill="#00ff00"/><rect x="529" y="183" width="1" height="26" fill="#00c800"/><rect x="536" y="183" width="1" height="26" fill="#00ff00"/><rect x="544" y="183" width="1" height="26" fill="#00c800"/><rect x="552" y="183" width="1" height="26" fill="#00ff00"/><rect x="560" y="183" width="1" height="26" fill="#00c800"/><rect x="568" y="183" width="1" height="26" fill="#00ff00"/><rect x="576" y="183" width="1" height="26" fill="#00c800"/><rect x="583" y="183" width="1" height="26" fill="#00ff00"/><rect x="591" y="183" width="1" height="26" fill="#00c800"/><rect x="599" y="183" width="1" height="26" fill="#00ff00"/><rect x="607" y="183" width="1" height="26" fill="#00c800"/><rect x="615" y="183" width="1" height="26" fill="#00ff00"/><rect x="622" y="183" width="1" height="26" fill="#00c800"/><rect x="630" y="183" width="1" height="26" fill="#00ff00"/><rect x="638" y="183" width="1" height="26" fill="#00c800"/><rect x="646" y="183" width="1" height="26" fill="#00ff00"/><rect x="654" y="183" width="1" height="26" fill="#00c800"/><rect x="669" y="183" width="1" height="26" fill="#00ff00"/><rect x="121" y="209" width="1" height="25" fill="#96e6f8"/><rect x="129" y="209" width="1" height="25" fill="#00c8f0"/><rect x="136" y="209" width="1" height="25" fill="#96e6f8"/><rect x="144" y="209" width="1" height="25" fill="#00c8f0"/><rect x="152" y="209" width="1" height="25" fill="#96e6f8"/><rect x="160" y="209" width="1" height="25" fill="#00c8f0"/><rect x="168" y="209" width="1" height="25" fill="#96e6f8"/><rect x="176" y="209" width="1" height="25" fill="#00c8f0"/><rect x="183" y="209" width="1" height="25" fill="#96e6f8"/><rect x="191" y="209" width="1" height="25" fill="#00c8f0"/><rect x="199" y="209" width="1" height="25" fill="#96e6f8"/><rect x="207" y="209" width="1" height="25" fill="#00c8f0"/><rect x="215" y="209" width="1" height="25" fill="#96e6f8"/><rect x="222" y="209" width="1" height="25" fill="#00c8f0"/><rect x="230" y="209" width="1" height="25" fill="#96e6f8"/><rect x="238" y="209" width="1" height="25" fill="#00c8f0"/><rect x="246" y="209" width="1" height="25" fill="#96e6f8"/><rect x="254" y="209" width="1" height="25" fill="#00c8f0"/><rect x="262" y="209" width="1" height="25" fill="#96e6f8"/><rect x="269" y="209" width="1" height="25" fill="#00c8f0"/><rect x="277" y="209" width="1" height="25" fill="#96e6f8"/><rect x="293" y="209" width="1" height="25" fill="#00c8f0"/><rect x="301" y="209" width="1" height="25" fill="#96e6f8"/><rect x="309" y="209" width="1" height="25" fill="#00c8f0"/><rect x="316" y="209" width="1" height="25" fill="#96e6f8"/><rect x="324" y="209" width="1" height="25" fill="#00c8f0"/><rect x="332" y="209" width="1" height="25" fill="#96e6f8"/><rect x="340" y="209" width="1" height="25" fill="#00c8f0"/><rect x="348" y="209" width="1" height="25" fill="#96e6f8"/><rect x="355" y="209" width="1" height="25" fill="#00c8f0"/><rect x="363" y="209" width="1" height="25" fill="#96e6f8"/><rect x="371" y="209" width="1" height="25" fill="#00c8f0"/><rect x="379" y="209" width="1" height="25" fill="#96e6f8"/><rect x="387" y="209" width="1" height="25" fill="#00c8f0"/><rect x="395" y="209" width="1" height="25" fill="#96e6f8"/><rect x="402" y="209" width="1" height="25" fill="#00c8f0"/><rect x="410" y="209" width="1" height="25" fill="#96e6f8"/><rect x="418" y="209" width="1" height="25" fill="#00c8f0"/><rect x="426" y="209" width="1" height="25" fill="#96e6f8"/><rect x="434" y="209" width="1" height="25" fill="#00c8f0"/><rect x="442" y="209" width="1" height="25" fill="#96e6f8"/><rect x="449" y="209" width="1" height="25" fill="#00c8f0"/><rect x="457" y="209" width="1" height="25" fill="#96e6f8"/><rect x="465" y="209" width="1" height="25" fill="#00c8f0"/><rect x="481" y="209" width="1" height="25" fill="#96e6f8"/><rect x="488" y="209" width="1" height="25" fill="#00c8f0"/><rect x="496" y="209" width="1" height="25" fill="#96e6f8"/><rect x="504" y="209" width="1" height="25" fill="#00c8f0"/><rect x="512" y="209" width="1" height="25" fill="#96e6f8"/><rect x="520" y="209" width="1" height="25" fill="#00c8f0"/><rect x="528" y="209" width="1" height="25" fill="#96e6f8"/><rect x="535" y="209" width="1" height="25" fill="#00c8f0"/><rect x="543" y="209" width="1" height="25" fill="#96e6f8"/><rect x="551" y="209" width="1" height="25" fill="#00c8f0"/><rect x="559" y="209" width="1" height="25" fill="#96e6f8"/><rect x="567" y="209" width="1" height="25" fill="#00c8f0"/><rect x="574" y="209" width="1" height="25" fill="#96e6f8"/><rect x="582" y="209" width="1" height="25" fill="#00c8f0"/><rect x="590" y="209" width="1" height="25" fill="#96e6f8"/><rect x="598" y="209" width="1" height="25" fill="#00c8f0"/><rect x="606" y="209" width="1" height="25" fill="#96e6f8"/><rect x="614" y="209" width="1" height="25" fill="#00c8f0"/><rect x="621" y="209" width="1" height="25" fill="#96e6f8"/><rect x="629" y="209" width="1" height="25" fill="#00c8f0"/><rect x="637" y="209" width="1" height="25" fill="#96e6f8"/><rect x="645" y="209" width="1" height="25" fill="#00c8f0"/><rect x="653" y="209" width="1" height="25" fill="#96e6f8"/><rect x="668" y="209" width="1" height="25" fill="#00c8f0"/><rect x="119" y="234" width="1" height="26" fill="#00ff00"/><rect x="124" y="234" width="1" height="26" fill="#00c800"/><rect x="127" y="234" width="1" height="26" fill="#00ff00"/><rect x="132" y="234" width="1" height="26" fill="#00c800"/><rect x="134" y="234" width="1" height="26" fill="#00ff00"/><rect x="140" y="234" width="1" height="26" fill="#00c800"/><rect x="142" y="234" width="1" height="26" fill="#00ff00"/><rect x="147" y="234" width="1" height="26" fill="#00c800"/><rect x="150" y="234" width="1" height="26" fill="#00ff00"/><rect x="155" y="234" width="1" height="26" fill="#00c800"/><rect x="158" y="234" width="1" height="26" fill="#00ff00"/><rect x="166" y="234" width="1" height="26" fill="#00c800"/><rect x="171" y="234" width="1" height="26" fill="#00ff00"/><rect x="173" y="234" width="1" height="26" fill="#00c800"/><rect x="179" y="234" width="1" height="26" fill="#00ff00"/><rect x="181" y="234" width="1" height="26" fill="#00c800"/><rect x="187" y="234" width="1" height="26" fill="#00ff00"/><rect x="189" y="234" width="1" height="26" fill="#00c800"/><rect x="194" y="234" width="1" height="26" fill="#00ff00"/><rect x="197" y="234" width="1" height="26" fill="#00c800"/><rect x="202" y="234" width="1" height="26" fill="#00ff00"/><rect x="205" y="234" width="1" height="26" fill="#00c800"/><rect x="210" y="234" width="1" height="26" fill="#00ff00"/><rect x="213" y="234" width="1" height="26" fill="#00c800"/><rect x="218" y="234" width="1" height="26" fill="#00ff00"/><rect x="220" y="234" width="1" height="26" fill="#00c800"/><rect x="228" y="234" width="1" height="26" fill="#00ff00"/><rect x="233" y="234" width="1" height="26" fill="#00c800"/><rect x="236" y="234" width="1" height="26" fill="#00ff00"/><rect x="241" y="234" width="1" height="26" fill="#00c800"/><rect x="244" y="234" width="1" height="26" fill="#00ff00"/><rect x="249" y="234" width="1" height="26" fill="#00c800"/><rect x="252" y="234" width="1" height="26" fill="#00ff00"/><rect x="260" y="234" width="1" height="26" fill="#00c800"/><rect x="265" y="234" width="1" height="26" fill="#00ff00"/><rect x="267" y="234" width="1" height="26" fill="#00c800"/><rect x="275" y="234" width="1" height="26" fill="#00ff00"/><rect x="280" y="234" width="1" height="26" fill="#00c800"/><rect x="283" y="234" width="1" height="26" fill="#00ff00"/><rect x="291" y="234" width="1" height="26" fill="#00c800"/><rect x="296" y="234" width="1" height="26" fill="#00ff00"/><rect x="299" y="234" width="1" height="26" fill="#00c800"/><rect x="306" y="234" width="1" height="26" fill="#00ff00"/><rect x="312" y="234" width="1" height="26" fill="#00c800"/><rect x="314" y="234" width="1" height="26" fill="#00ff00"/><rect x="319" y="234" width="1" height="26" fill="#00c800"/><rect x="322" y="234" width="1" height="26" fill="#00ff00"/><rect x="327" y="234" width="1" height="26" fill="#00c800"/><rect x="330" y="234" width="1" height="26" fill="#00ff00"/><rect x="335" y="234" width="1" height="26" fill="#00c800"/><rect x="338" y="234" width="1" height="26" fill="#00ff00"/><rect x="343" y="234" width="1" height="26" fill="#00c800"/><rect x="346" y="234" width="1" height="26" fill="#00ff00"/><rect x="353" y="234" width="1" height="26" fill="#00c800"/><rect x="359" y="234" width="1" height="26" fill="#00ff00"/><rect x="361" y="234" width="1" height="26" fill="#00c800"/><rect x="367" y="234" width="1" height="26" fill="#00ff00"/><rect x="369" y="234" width="1" height="26" fill="#00c800"/><rect x="374" y="234" width="1" height="26" fill="#00ff00"/><rect x="377" y="234" width="1" height="26" fill="#00c800"/><rect x="382" y="234" width="1" height="26" fill="#00ff00"/><rect x="385" y="234" width="1" height="26" fill="#00c800"/><rect x="390" y="234" width="1" height="26" fill="#00ff00"/><rect x="392" y="234" width="1" height="26" fill="#00c800"/><rect x="400" y="234" width="1" height="26" fill="#00ff00"/><rect x="406" y="234" width="1" height="26" fill="#00c800"/><rect x="408" y="234" width="1" height="26" fill="#00ff00"/><rect x="413" y="234" width="1" height="26" fill="#00c800"/><rect x="416" y="234" width="1" height="26" fill="#00ff00"/><rect x="421" y="234" width="1" height="26" fill="#00c800"/><rect x="424" y="234" width="1" height="26" fill="#00ff00"/><rect x="429" y="234" width="1" height="26" fill="#00c800"/><rect x="432" y="234" width="1" height="26" fill="#00ff00"/><rect x="437" y="234" width="1" height="26" fill="#00c800"/><rect x="439" y="234" width="1" height="26" fill="#00ff00"/><rect x="447" y="234" width="1" height="26" fill="#00c800"/><rect x="452" y="234" width="1" height="26" fill="#00ff00"/><rect x="463" y="234" width="1" height="26" fill="#00c800"/><rect x="468" y="234" width="1" height="26" fill="#00ff00"/><rect x="471" y="234" width="1" height="26" fill="#00c800"/><rect x="476" y="234" width="1" height="26" fill="#00ff00"/><rect x="479" y="234" width="1" height="26" fill="#00c800"/><rect x="484" y="234" width="1" height="26" fill="#00ff00"/><rect x="486" y="234" width="1" height="26" fill="#00c800"/><rect x="494" y="234" width="1" height="26" fill="#00ff00"/><rect x="499" y="234" width="1" height="26" fill="#00c800"/><rect x="502" y="234" width="1" height="26" fill="#00ff00"/><rect x="507" y="234" width="1" height="26" fill="#00c800"/><rect x="510" y="234" width="1" height="26" fill="#00ff00"/><rect x="515" y="234" width="1" height="26" fill="#00c800"/><rect x="518" y="234" width="1" height="26" fill="#00ff00"/><rect x="523" y="234" width="1" height="26" fill="#00c800"/><rect x="525" y="234" width="1" height="26" fill="#00ff00"/><rect x="531" y="234" width="1" height="26" fill="#00c800"/><rect x="533" y="234" width="1" height="26" fill="#00ff00"/><rect x="541" y="234" width="1" height="26" fill="#00c800"/><rect x="546" y="234" width="1" height="26" fill="#00ff00"/><rect x="549" y="234" width="1" height="26" fill="#00c800"/><rect x="554" y="234" width="1" height="26" fill="#00ff00"/><rect x="557" y="234" width="1" height="26" fill="#00c800"/><rect x="562" y="234" width="1" height="26" fill="#00ff00"/><rect x="565" y="234" width="1" height="26" fill="#00c800"/><rect x="570" y="234" width="1" height="26" fill="#00ff00"/><rect x="572" y="234" width="1" height="26" fill="#00c800"/><rect x="578" y="234" width="1" height="26" fill="#00ff00"/><rect x="580" y="234" width="1" height="26" fill="#00c800"/><rect x="588" y="234" width="1" height="26" fill="#00ff00"/><rect x="593" y="234" width="1" height="26" fill="#00c800"/><rect x="596" y="234" width="1" height="26" fill="#00ff00"/><rect x="601" y="234" width="1" height="26" fill="#00c800"/><rect x="604" y="234" width="1" height="26" fill="#00ff00"/><rect x="609" y="234" width="1" height="26" fill="#00c800"/><rect x="612" y="234" width="1" height="26" fill="#00ff00"/><rect x="617" y="234" width="1" height="26" fill="#00c800"/><rect x="619" y="234" width="1" height="26" fill="#00ff00"/><rect x="625" y="234" width="1" height="26" fill="#00c800"/><rect x="627" y="234" width="1" height="26" fill="#00ff00"/><rect x="635" y="234" width="1" height="26" fill="#00c800"/><rect x="640" y="234" width="1" height="26" fill="#00ff00"/><rect x="643" y="234" width="1" height="26" fill="#00c800"/><rect x="651" y="234" width="1" height="26" fill="#00ff00"/><rect x="656" y="234" width="1" height="26" fill="#00c800"/><rect x="658" y="234" width="1" height="26" fill="#00ff00"/><rect x="666" y="234" width="1" height="26" fill="#00c800"/><rect x="125" y="260" width="1" height="25" fill="#96e6f8"/><rect x="133" y="260" width="1" height="25" fill="#00c8f0"/><rect x="141" y="260" width="1" height="25" fill="#96e6f8"/><rect x="149" y="260" width="1" height="25" fill="#00c8f0"/><rect x="157" y="260" width="1" height="25" fill="#96e6f8"/><rect x="172" y="260" width="1" height="25" fill="#00c8f0"/><rect x="180" y="260" width="1" height="25" fill="#96e6f8"/><rect x="196" y="260" width="1" height="25" fill="#00c8f0"/><rect x="204" y="260" width="1" height="25" fill="#96e6f8"/><rect x="212" y="260" width="1" height="25" fill="#00c8f0"/><rect x="219" y="260" width="1" height="25" fill="#96e6f8"/><rect x="235" y="260" width="1" height="25" fill="#00c8f0"/><rect x="243" y="260" width="1" height="25" fill="#96e6f8"/><rect x="251" y="260" width="1" height="25" fill="#00c8f0"/><rect x="266" y="260" width="1" height="25" fill="#96e6f8"/><rect x="274" y="260" width="1" height="25" fill="#00c8f0"/><rect x="282" y="260" width="1" height="25" fill="#96e6f8"/><rect x="290" y="260" width="1" height="25" fill="#00c8f0"/><rect x="298" y="260" width="1" height="25" fill="#96e6f8"/><rect x="313" y="260" width="1" height="25" fill="#00c8f0"/><rect x="321" y="260" width="1" height="25" fill="#96e6f8"/><rect x="329" y="260" width="1" height="25" fill="#00c8f0"/><rect x="337" y="260" width="1" height="25" fill="#96e6f8"/><rect x="345" y="260" width="1" height="25" fill="#00c8f0"/><rect x="360" y="260" width="1" height="25" fill="#96e6f8"/><rect x="368" y="260" width="1" height="25" fill="#00c8f0"/><rect x="384" y="260" width="1" height="25" fill="#96e6f8"/><rect x="391" y="260" width="1" height="25" fill="#00c8f0"/><rect x="407" y="260" width="1" height="25" fill="#96e6f8"/><rect x="415" y="260" width="1" height="25" fill="#00c8f0"/><rect x="423" y="260" width="1" height="25" fill="#96e6f8"/><rect x="431" y="260" width="1" height="25" fill="#00c8f0"/><rect x="438" y="260" width="1" height="25" fill="#96e6f8"/><rect x="454" y="260" width="1" height="25" fill="#00c8f0"/><rect x="462" y="260" width="1" height="25" fill="#96e6f8"/><rect x="470" y="260" width="1" height="25" fill="#00c8f0"/><rect x="477" y="260" width="1" height="25" fill="#96e6f8"/><rect x="485" y="260" width="1" height="25" fill="#00c8f0"/><rect x="501" y="260" width="1" height="25" fill="#96e6f8"/><rect x="509" y="260" width="1" height="25" fill="#00c8f0"/><rect x="517" y="260" width="1" height="25" fill="#96e6f8"/><rect x="524" y="260" width="1" height="25" fill="#00c8f0"/><rect x="532" y="260" width="1" height="25" fill="#96e6f8"/><rect x="548" y="260" width="1" height="25" fill="#00c8f0"/><rect x="556" y="260" width="1" height="25" fill="#96e6f8"/><rect x="571" y="260" width="1" height="25" fill="#00c8f0"/><rect x="579" y="260" width="1" height="25" fill="#96e6f8"/><rect x="595" y="260" width="1" height="25" fill="#00c8f0"/><rect x="603" y="260" width="1" height="25" fill="#96e6f8"/><rect x="610" y="260" width="1" height="25" fill="#00c8f0"/><rect x="618" y="260" width="1" height="25" fill="#96e6f8"/><rect x="626" y="260" width="1" height="25" fill="#00c8f0"/><rect x="642" y="260" width="1" height="25" fill="#96e6f8"/><rect x="650" y="260" width="1" height="25" fill="#00c8f0"/><rect x="657" y="260" width="1" height="25" fill="#96e6f8"/><rect x="665" y="260" width="1" height="25" fill="#00c8f0"/><rect x="187" y="285" width="1" height="26" fill="#96e6f8"/><rect x="374" y="285" width="1" height="26" fill="#00c8f0"/><rect x="562" y="285" width="1" height="26" fill="#96e6f8"/><rect x="114" y="311" width="1" height="25" fill="#ffff00"/><rect x="118" y="311" width="1" height="25" fill="#ffff00"/><rect x="120" y="311" width="1" height="25" fill="#ffff00"/><rect x="122" y="311" width="2" height="25" fill="#ffff00"/><rect x="125" y="311" width="2" height="25" fill="#ffff00"/><rect x="128" y="311" width="2" height="25" fill="#ffff00"/><rect x="131" y="311" width="1" height="25" fill="#ffff00"/><rect x="133" y="311" width="2" height="25" fill="#ffff00"/><rect x="136" y="311" width="2" height="25" fill="#ffff00"/><rect x="139" y="311" width="2" height="25" fill="#ffff00"/><rect x="142" y="311" width="2" height="25" fill="#ffff00"/><rect x="145" y="311" width="1" height="25" fill="#ffff00"/><rect x="147" y="311" width="2" height="25" fill="#ffff00"/><rect x="150" y="311" width="2" height="25" fill="#ffff00"/><rect x="153" y="311" width="2" height="25" fill="#ffff00"/><rect x="156" y="311" width="2" height="25" fill="#ffff00"/><rect x="159" y="311" width="1" height="25" fill="#ffff00"/><rect x="161" y="311" width="1" height="25" fill="#ffff00"/><rect x="165" y="311" width="1" height="25" fill="#ffff00"/><rect x="167" y="311" width="2" height="25" fill="#ffff00"/><rect x="170" y="311" width="1" height="25" fill="#ffff00"/><rect x="172" y="311" width="2" height="25" fill="#ffff00"/><rect x="175" y="311" width="2" height="25" fill="#ffff00"/><rect x="178" y="311" width="2" height="25" fill="#ffff00"/><rect x="181" y="311" width="2" height="25" fill="#ffff00"/><rect x="184" y="311" width="1" height="25" fill="#ffff00"/><rect x="186" y="311" width="2" height="25" fill="#ffff00"/><rect x="189" y="311" width="2" height="25" fill="#ffff00"/><rect x="192" y="311" width="2" height="25" fill="#ffff00"/><rect x="195" y="311" width="2" height="25" fill="#ffff00"/><rect x="198" y="311" width="1" height="25" fill="#ffff00"/><rect x="200" y="311" width="2" height="25" fill="#ffff00"/><rect x="203" y="311" width="2" height="25" fill="#ffff00"/><rect x="206" y="311" width="2" height="25" fill="#ffff00"/><rect x="209" y="311" width="1" height="25" fill="#ffff00"/><rect x="211" y="311" width="2" height="25" fill="#ffff00"/><rect x="214" y="311" width="2" height="25" fill="#ffff00"/><rect x="217" y="311" width="2" height="25" fill="#ffff00"/><rect x="220" y="311" width="2" height="25" fill="#ffff00"/><rect x="223" y="311" width="1" height="25" fill="#ffff00"/><rect x="228" y="311" width="2" height="25" fill="#ffff00"/><rect x="231" y="311" width="2" height="25" fill="#ffff00"/><rect x="234" y="311" width="2" height="25" fill="#ffff00"/><rect x="237" y="311" width="1" height="25" fill="#ffff00"/><rect x="239" y="311" width="2" height="25" fill="#ffff00"/><rect x="242" y="311" width="2" height="25" fill="#ffff00"/><rect x="245" y="311" width="2" height="25" fill="#ffff00"/><rect x="248" y="311" width="1" height="25" fill="#ffff00"/><rect x="250" y="311" width="2" height="25" fill="#ffff00"/><rect x="253" y="311" width="2" height="25" fill="#ffff00"/><rect x="259" y="311" width="2" height="25" fill="#ffff00"/><rect x="262" y="311" width="1" height="25" fill="#ffff00"/><rect x="264" y="311" width="2" height="25" fill="#ffff00"/><rect x="267" y="311" width="2" height="25" fill="#ffff00"/><rect x="270" y="311" width="2" height="25" fill="#ffff00"/><rect x="273" y="311" width="2" height="25" fill="#ffff00"/><rect x="276" y="311" width="1" height="25" fill="#ffff00"/><rect x="278" y="311" width="2" height="25" fill="#ffff00"/><rect x="281" y="311" width="2" height="25" fill="#ffff00"/><rect x="284" y="311" width="1" height="25" fill="#ffff00"/><rect x="289" y="311" width="2" height="25" fill="#ffff00"/><rect x="292" y="311" width="2" height="25" fill="#ffff00"/><rect x="295" y="311" width="2" height="25" fill="#ffff00"/><rect x="298" y="311" width="2" height="25" fill="#ffff00"/><rect x="301" y="311" width="1" height="25" fill="#ffff00"/><rect x="306" y="311" width="2" height="25" fill="#ffff00"/><rect x="309" y="311" width="2" height="25" fill="#ffff00"/><rect x="312" y="311" width="2" height="25" fill="#ffff00"/><rect x="315" y="311" width="1" height="25" fill="#ffff00"/><rect x="317" y="311" width="2" height="25" fill="#ffff00"/><rect x="320" y="311" width="2" height="25" fill="#ffff00"/><rect x="323" y="311" width="2" height="25" fill="#ffff00"/><rect x="326" y="311" width="1" height="25" fill="#ffff00"/><rect x="328" y="311" width="2" height="25" fill="#ffff00"/><rect x="331" y="311" width="2" height="25" fill="#ffff00"/><rect x="334" y="311" width="2" height="25" fill="#ffff00"/><rect x="337" y="311" width="2" height="25" fill="#ffff00"/><rect x="340" y="311" width="1" height="25" fill="#ffff00"/><rect x="342" y="311" width="2" height="25" fill="#ffff00"/><rect x="345" y="311" width="2" height="25" fill="#ffff00"/><rect x="348" y="311" width="1" height="25" fill="#ffff00"/><rect x="354" y="311" width="1" height="25" fill="#ffff00"/><rect x="356" y="311" width="2" height="25" fill="#ffff00"/><rect x="359" y="311" width="2" height="25" fill="#ffff00"/><rect x="362" y="311" width="2" height="25" fill="#ffff00"/><rect x="365" y="311" width="1" height="25" fill="#ffff00"/><rect x="367" y="311" width="2" height="25" fill="#ffff00"/><rect x="370" y="311" width="2" height="25" fill="#ffff00"/><rect x="373" y="311" width="2" height="25" fill="#ffff00"/><rect x="376" y="311" width="2" height="25" fill="#ffff00"/><rect x="379" y="311" width="1" height="25" fill="#ffff00"/><rect x="381" y="311" width="2" height="25" fill="#ffff00"/><rect x="384" y="311" width="2" height="25" fill="#ffff00"/><rect x="387" y="311" width="2" height="25" fill="#ffff00"/><rect x="390" y="311" width="2" height="25" fill="#ffff00"/><rect x="393" y="311" width="1" height="25" fill="#ffff00"/><rect x="395" y="311" width="1" height="25" fill="#ffff00"/><rect x="401" y="311" width="2" height="25" fill="#ffff00"/><rect x="404" y="311" width="1" height="25" fill="#ffff00"/><rect x="406" y="311" width="2" height="25" fill="#ffff00"/><rect x="409" y="311" width="2" height="25" fill="#ffff00"/><rect x="412" y="311" width="2" height="25" fill="#ffff00"/><rect x="415" y="311" width="2" height="25" fill="#ffff00"/><rect x="418" y="311" width="1" height="25" fill="#ffff00"/><rect x="420" y="311" width="2" height="25" fill="#ffff00"/><rect x="423" y="311" width="2" height="25" fill="#ffff00"/><rect x="426" y="311" width="2" height="25" fill="#ffff00"/><rect x="429" y="311" width="2" height="25" fill="#ffff00"/><rect x="432" y="311" width="1" height="25" fill="#ffff00"/><rect x="434" y="311" width="2" height="25" fill="#ffff00"/><rect x="437" y="311" width="2" height="25" fill="#ffff00"/><rect x="440" y="311" width="2" height="25" fill="#ffff00"/><rect x="448" y="311" width="2" height="25" fill="#ffff00"/><rect x="451" y="311" width="2" height="25" fill="#ffff00"/><rect x="454" y="311" width="2" height="25" fill="#ffff00"/><rect x="457" y="311" width="1" height="25" fill="#ffff00"/><rect x="459" y="311" width="2" height="25" fill="#ffff00"/><rect x="462" y="311" width="2" height="25" fill="#ffff00"/><rect x="465" y="311" width="2" height="25" fill="#ffff00"/><rect x="468" y="311" width="2" height="25" fill="#ffff00"/><rect x="471" y="311" width="1" height="25" fill="#ffff00"/><rect x="473" y="311" width="2" height="25" fill="#ffff00"/><rect x="476" y="311" width="2" height="25" fill="#ffff00"/><rect x="479" y="311" width="2" height="25" fill="#ffff00"/><rect x="482" y="311" width="1" height="25" fill="#ffff00"/><rect x="484" y="311" width="2" height="25" fill="#ffff00"/><rect x="487" y="311" width="2" height="25" fill="#ffff00"/><rect x="494" y="311" width="1" height="25" fill="#ffff00"/><rect x="496" y="311" width="1" height="25" fill="#ffff00"/><rect x="498" y="311" width="2" height="25" fill="#ffff00"/><rect x="501" y="311" width="2" height="25" fill="#ffff00"/><rect x="504" y="311" width="2" height="25" fill="#ffff00"/><rect x="507" y="311" width="2" height="25" fill="#ffff00"/><rect x="510" y="311" width="1" height="25" fill="#ffff00"/><rect x="512" y="311" width="2" height="25" fill="#ffff00"/><rect x="515" y="311" width="2" height="25" fill="#ffff00"/><rect x="518" y="311" width="2" height="25" fill="#ffff00"/><rect x="521" y="311" width="1" height="25" fill="#ffff00"/><rect x="523" y="311" width="2" height="25" fill="#ffff00"/><rect x="526" y="311" width="2" height="25" fill="#ffff00"/><rect x="529" y="311" width="2" height="25" fill="#ffff00"/><rect x="532" y="311" width="2" height="25" fill="#ffff00"/><rect x="535" y="311" width="1" height="25" fill="#ffff00"/><rect x="543" y="311" width="2" height="25" fill="#ffff00"/><rect x="546" y="311" width="2" height="25" fill="#ffff00"/><rect x="549" y="311" width="1" height="25" fill="#ffff00"/><rect x="551" y="311" width="2" height="25" fill="#ffff00"/><rect x="554" y="311" width="2" height="25" fill="#ffff00"/><rect x="557" y="311" width="2" height="25" fill="#ffff00"/><rect x="560" y="311" width="4" height="25" fill="#ffff00"/><rect x="565" y="311" width="2" height="25" fill="#ffff00"/><rect x="568" y="311" width="2" height="25" fill="#ffff00"/><rect x="571" y="311" width="2" height="25" fill="#ffff00"/><rect x="574" y="311" width="1" height="25" fill="#ffff00"/><rect x="576" y="311" width="2" height="25" fill="#ffff00"/><rect x="579" y="311" width="2" height="25" fill="#ffff00"/><rect x="582" y="311" width="2" height="25" fill="#ffff00"/><rect x="588" y="311" width="1" height="25" fill="#ffff00"/><rect x="590" y="311" width="2" height="25" fill="#ffff00"/><rect x="593" y="311" width="2" height="25" fill="#ffff00"/><rect x="596" y="311" width="2" height="25" fill="#ffff00"/><rect x="599" y="311" width="4" height="25" fill="#ffff00"/><rect x="604" y="311" width="2" height="25" fill="#ffff00"/><rect x="607" y="311" width="2" height="25" fill="#ffff00"/><rect x="610" y="311" width="2" height="25" fill="#ffff00"/><rect x="613" y="311" width="1" height="25" fill="#ffff00"/><rect x="615" y="311" width="2" height="25" fill="#ffff00"/><rect x="618" y="311" width="2" height="25" fill="#ffff00"/><rect x="621" y="311" width="2" height="25" fill="#ffff00"/><rect x="624" y="311" width="2" height="25" fill="#ffff00"/><rect x="627" y="311" width="1" height="25" fill="#ffff00"/><rect x="629" y="311" width="2" height="25" fill="#ffff00"/><rect x="635" y="311" width="2" height="25" fill="#ffff00"/><rect x="638" y="311" width="4" height="25" fill="#ffff00"/><rect x="643" y="311" width="2" height="25" fill="#ffff00"/><rect x="646" y="311" width="2" height="25" fill="#ffff00"/><rect x="649" y="311" width="2" height="25" fill="#ffff00"/><rect x="652" y="311" width="1" height="25" fill="#ffff00"/><rect x="654" y="311" width="2" height="25" fill="#ffff00"/><rect x="657" y="311" width="2" height="25" fill="#ffff00"/><rect x="660" y="311" width="2" height="25" fill="#ffff00"/><rect x="664" y="311" width="1" height="25" fill="#ffff00"/><rect x="666" y="311" width="1" height="25" fill="#ffff00"/><rect x="668" y="311" width="2" height="25" fill="#ffff00"/><rect x="285" y="336" width="3" height="26" fill="#96e6f8"/><rect x="473" y="336" width="3" height="26" fill="#00c8f0"/><rect x="661" y="336" width="2" height="26" fill="#96e6f8"/><rect x="271" y="362" width="1" height="26" fill="#00ff00"/><rect x="646" y="362" width="1" height="26" fill="#00c800"/><rect x="285" y="388" width="1" height="25" fill="#96e6f8"/><rect x="660" y="388" width="1" height="25" fill="#00c8f0"/><rect x="108" y="455" width="1" height="29" fill="#ffffff"/><rect x="109" y="455" width="1" height="29" fill="#ffffff"/><rect x="110" y="455" width="1" height="29" fill="#ffffff"/><rect x="111" y="455" width="1" height="29" fill="#ffffff"/><rect x="112" y="455" width="1" height="29" fill="#ffffff"/><rect x="113" y="455" width="1" height="29" fill="#ffffff"/><rect x="114" y="453" width="1" height="31" fill="#ffffff"/><rect x="115" y="453" width="1" height="31" fill="#ffffff"/><rect x="116" y="449" width="1" height="35" fill="#ffffff"/><rect x="117" y="443" width="1" height="41" fill="#ffffff"/><rect x="118" y="435" width="1" height="49" fill="#ffffff"/><rect x="119" y="431" width="1" height="53" fill="#ffffff"/><rect x="120" y="435" width="1" height="49" fill="#ffffff"/><rect x="121" y="432" width="1" height="52" fill="#ffffff"/><rect x="122" y="430" width="1" height="54" fill="#ffffff"/><rect x="123" y="430" width="1" height="54" fill="#ffffff"/><rect x="124" y="433" width="1" height="51" fill="#ffffff"/><rect x="125" y="436" width="1" height="48" fill="#ffffff"/><rect x="126" y="439" width="1" height="45" fill="#ffffff"/><rect x="127" y="442" width="1" height="42" fill="#ffffff"/><rect x="128" y="446" width="1" height="38" fill="#ffffff"/><rect x="129" y="442" width="1" height="42" fill="#ffffff"/><rect x="130" y="441" width="1" height="43" fill="#ffffff"/><rect x="131" y="444" width="1" height="40" fill="#ffffff"/><rect x="132" y="444" width="1" height="40" fill="#ffffff"/><rect x="133" y="449" width="1" height="35" fill="#ffffff"/><rect x="134" y="450" width="1" height="34" fill="#ffffff"/><rect x="135" y="452" width="1" height="32" fill="#ffffff"/><rect x="136" y="457" width="1" height="27" fill="#ffffff"/><rect x="137" y="451" width="1" height="33" fill="#ffffff"/><rect x="138" y="451" width="1" height="33" fill="#ffffff"/><rect x="139" y="455" width="1" height="29" fill="#ffffff"/><rect x="140" y="459" width="1" height="25" fill="#ffffff"/><rect x="141" y="460" width="1" height="24" fill="#ffffff"/><rect x="142" y="462" width="1" height="22" fill="#ffffff"/><rect x="143" y="462" width="1" height="22" fill="#ffffff"/><rect x="144" y="467" width="1" height="17" fill="#ffffff"/><rect x="145" y="461" width="1" height="23" fill="#ffffff"/><rect x="146" y="461" width="1" height="23" fill="#ffffff"/><rect x="147" y="464" width="1" height="20" fill="#ffffff"/><rect x="148" y="470" width="1" height="14" fill="#ffffff"/><rect x="149" y="471" width="1" height="13" fill="#ffffff"/><rect x="150" y="471" width="1" height="13" fill="#ffffff"/><rect x="151" y="473" width="1" height="11" fill="#ffffff"/><rect x="152" y="477" width="1" height="7" fill="#ffffff"/><rect x="153" y="472" width="1" height="12" fill="#ffffff"/><rect x="154" y="472" width="1" height="12" fill="#ffffff"/><rect x="155" y="476" width="1" height="8" fill="#ffffff"/><rect x="156" y="480" width="1" height="4" fill="#ffffff"/><rect x="157" y="482" width="1" height="2" fill="#ffffff"/><rect x="158" y="482" width="1" height="2" fill="#ffffff"/><rect x="159" y="479" width="1" height="5" fill="#ffffff"/><rect x="160" y="475" width="1" height="9" fill="#ffffff"/><rect x="161" y="473" width="1" height="11" fill="#ffffff"/><rect x="162" y="473" width="1" height="11" fill="#ffffff"/><rect x="163" y="470" width="1" height="14" fill="#ffffff"/><rect x="164" y="462" width="1" height="22" fill="#ffffff"/><rect x="165" y="454" width="1" height="30" fill="#ffffff"/><rect x="166" y="452" width="1" height="32" fill="#ffffff"/><rect x="167" y="455" width="1" height="29" fill="#ffffff"/><rect x="168" y="453" width="1" height="31" fill="#ffffff"/><rect x="169" y="451" width="1" height="33" fill="#ffffff"/><rect x="170" y="455" width="1" height="29" fill="#ffffff"/><rect x="171" y="455" width="1" height="29" fill="#ffffff"/><rect x="172" y="458" width="1" height="26" fill="#ffffff"/><rect x="173" y="461" width="1" height="23" fill="#ffffff"/><rect x="174" y="462" width="1" height="22" fill="#ffffff"/><rect x="175" y="466" width="1" height="18" fill="#ffffff"/><rect x="176" y="462" width="1" height="22" fill="#ffffff"/><rect x="177" y="463" width="1" height="21" fill="#ffffff"/><rect x="178" y="467" width="1" height="17" fill="#ffffff"/><rect x="179" y="470" width="1" height="14" fill="#ffffff"/><rect x="180" y="470" width="1" height="14" fill="#ffffff"/><rect x="181" y="471" width="1" height="13" fill="#ffffff"/><rect x="182" y="471" width="1" height="13" fill="#ffffff"/><rect x="183" y="477" width="1" height="7" fill="#ffffff"/><rect x="184" y="471" width="1" height="13" fill="#ffffff"/><rect x="185" y="471" width="1" height="13" fill="#ffffff"/><rect x="186" y="476" width="1" height="8" fill="#ffffff"/><rect x="187" y="479" width="1" height="5" fill="#ffffff"/><rect x="188" y="481" width="1" height="3" fill="#ffffff"/><rect x="189" y="481" width="1" height="3" fill="#ffffff"/><rect x="190" y="481" width="1" height="3" fill="#ffffff"/><rect x="191" y="480" width="1" height="4" fill="#ffffff"/><rect x="192" y="472" width="1" height="12" fill="#ffffff"/><rect x="193" y="474" width="1" height="10" fill="#ffffff"/><rect x="194" y="478" width="1" height="6" fill="#ffffff"/><rect x="195" y="481" width="1" height="3" fill="#ffffff"/><rect x="196" y="482" width="1" height="2" fill="#ffffff"/><rect x="197" y="482" width="1" height="2" fill="#ffffff"/><rect x="198" y="481" width="1" height="3" fill="#ffffff"/><rect x="199" y="480" width="1" height="4" fill="#ffffff"/><rect x="200" y="474" width="1" height="10" fill="#ffffff"/><rect x="201" y="473" width="1" height="11" fill="#ffffff"/><rect x="202" y="477" width="1" height="7" fill="#ffffff"/><rect x="203" y="480" width="1" height="4" fill="#ffffff"/><rect x="204" y="481" width="1" height="3" fill="#ffffff"/><rect x="205" y="481" width="1" height="3" fill="#ffffff"/><rect x="206" y="481" width="1" height="3" fill="#ffffff"/><rect x="207" y="478" width="1" height="6" fill="#ffffff"/><rect x="208" y="474" width="1" height="10" fill="#ffffff"/><rect x="209" y="475" width="1" height="9" fill="#ffffff"/><rect x="210" y="480" width="1" height="4" fill="#ffffff"/><rect x="211" y="481" width="1" height="3" fill="#ffffff"/><rect x="212" y="481" width="1" height="3" fill="#ffffff"/><rect x="213" y="480" width="1" height="4" fill="#ffffff"/><rect x="214" y="476" width="1" height="8" fill="#ffffff"/><rect x="215" y="474" width="1" height="10" fill="#ffffff"/><rect x="216" y="472" width="1" height="12" fill="#ffffff"/><rect x="217" y="477" width="1" height="7" fill="#ffffff"/><rect x="218" y="480" width="1" height="4" fill="#ffffff"/><rect x="219" y="480" width="1" height="4" fill="#ffffff"/><rect x="220" y="481" width="1" height="3" fill="#ffffff"/><rect x="221" y="481" width="1" height="3" fill="#ffffff"/><rect x="222" y="481" width="1" height="3" fill="#ffffff"/><rect x="223" y="475" width="1" height="9" fill="#ffffff"/><rect x="224" y="473" width="1" height="11" fill="#ffffff"/><rect x="225" y="473" width="1" height="11" fill="#ffffff"/><rect x="226" y="467" width="1" height="17" fill="#ffffff"/><rect x="227" y="460" width="1" height="24" fill="#ffffff"/><rect x="228" y="452" width="1" height="32" fill="#ffffff"/><rect x="229" y="452" width="1" height="32" fill="#ffffff"/><rect x="230" y="457" width="1" height="27" fill="#ffffff"/><rect x="231" y="451" width="1" height="33" fill="#ffffff"/><rect x="232" y="451" width="1" height="33" fill="#ffffff"/><rect x="233" y="456" width="1" height="28" fill="#ffffff"/><rect x="234" y="459" width="1" height="25" fill="#ffffff"/><rect x="235" y="461" width="1" height="23" fill="#ffffff"/><rect x="236" y="462" width="1" height="22" fill="#ffffff"/><rect x="237" y="462" width="1" height="22" fill="#ffffff"/><rect x="238" y="467" width="1" height="17" fill="#ffffff"/><rect x="239" y="461" width="1" height="23" fill="#ffffff"/><rect x="240" y="461" width="1" height="23" fill="#ffffff"/><rect x="241" y="466" width="1" height="18" fill="#ffffff"/><rect x="242" y="470" width="1" height="14" fill="#ffffff"/><rect x="243" y="472" width="1" height="12" fill="#ffffff"/><rect x="244" y="472" width="1" height="12" fill="#ffffff"/><rect x="245" y="474" width="1" height="10" fill="#ffffff"/><rect x="246" y="474" width="1" height="10" fill="#ffffff"/><rect x="247" y="471" width="1" height="13" fill="#ffffff"/><rect x="248" y="471" width="1" height="13" fill="#ffffff"/><rect x="249" y="476" width="1" height="8" fill="#ffffff"/><rect x="250" y="476" width="1" height="8" fill="#ffffff"/><rect x="251" y="480" width="1" height="4" fill="#ffffff"/><rect x="252" y="482" width="1" height="2" fill="#ffffff"/><rect x="253" y="482" width="1" height="2" fill="#ffffff"/><rect x="254" y="475" width="1" height="9" fill="#ffffff"/><rect x="255" y="473" width="1" height="11" fill="#ffffff"/><rect x="256" y="475" width="1" height="9" fill="#ffffff"/><rect x="257" y="470" width="1" height="14" fill="#ffffff"/><rect x="258" y="461" width="1" height="23" fill="#ffffff"/><rect x="259" y="461" width="1" height="23" fill="#ffffff"/><rect x="260" y="453" width="1" height="31" fill="#ffffff"/><rect x="261" y="456" width="1" height="28" fill="#ffffff"/><rect x="262" y="452" width="1" height="32" fill="#ffffff"/><rect x="263" y="452" width="1" height="32" fill="#ffffff"/><rect x="264" y="454" width="1" height="30" fill="#ffffff"/><rect x="265" y="459" width="1" height="25" fill="#ffffff"/><rect x="266" y="459" width="1" height="25" fill="#ffffff"/><rect x="267" y="462" width="1" height="22" fill="#ffffff"/><rect x="268" y="462" width="1" height="22" fill="#ffffff"/><rect x="269" y="467" width="1" height="17" fill="#ffffff"/><rect x="270" y="461" width="1" height="23" fill="#ffffff"/><rect x="271" y="458" width="1" height="26" fill="#ffffff"/><rect x="272" y="458" width="1" height="26" fill="#ffffff"/><rect x="273" y="456" width="1" height="28" fill="#ffffff"/><rect x="274" y="459" width="1" height="25" fill="#ffffff"/><rect x="275" y="461" width="1" height="23" fill="#ffffff"/><rect x="276" y="461" width="1" height="23" fill="#ffffff"/><rect x="277" y="461" width="1" height="23" fill="#ffffff"/><rect x="278" y="466" width="1" height="18" fill="#ffffff"/><rect x="279" y="460" width="1" height="24" fill="#ffffff"/><rect x="280" y="465" width="1" height="19" fill="#ffffff"/><rect x="281" y="468" width="1" height="16" fill="#ffffff"/><rect x="282" y="470" width="1" height="14" fill="#ffffff"/><rect x="283" y="470" width="1" height="14" fill="#ffffff"/><rect x="284" y="472" width="1" height="12" fill="#ffffff"/><rect x="285" y="475" width="1" height="9" fill="#ffffff"/><rect x="286" y="477" width="1" height="7" fill="#ffffff"/><rect x="287" y="480" width="1" height="4" fill="#ffffff"/><rect x="288" y="483" width="1" height="1" fill="#ffffff"/><rect x="289" y="483" width="1" height="1" fill="#ffffff"/><rect x="290" y="483" width="1" height="1" fill="#ffffff"/><rect x="291" y="481" width="1" height="3" fill="#ffffff"/><rect x="292" y="481" width="1" height="3" fill="#ffffff"/><rect x="293" y="479" width="1" height="5" fill="#ffffff"/><rect x="294" y="472" width="1" height="12" fill="#ffffff"/><rect x="295" y="476" width="1" height="8" fill="#ffffff"/><rect x="296" y="480" width="1" height="4" fill="#ffffff"/><rect x="297" y="482" width="1" height="2" fill="#ffffff"/><rect x="298" y="482" width="1" height="2" fill="#ffffff"/><rect x="299" y="481" width="1" height="3" fill="#ffffff"/><rect x="300" y="481" width="1" height="3" fill="#ffffff"/><rect x="301" y="475" width="1" height="9" fill="#ffffff"/><rect x="302" y="474" width="1" height="10" fill="#ffffff"/><rect x="303" y="474" width="1" height="10" fill="#ffffff"/><rect x="304" y="468" width="1" height="16" fill="#ffffff"/><rect x="305" y="461" width="1" height="23" fill="#ffffff"/><rect x="306" y="452" width="1" height="32" fill="#ffffff"/><rect x="307" y="452" width="1" height="32" fill="#ffffff"/><rect x="308" y="457" width="1" height="27" fill="#ffffff"/><rect x="309" y="451" width="1" height="33" fill="#ffffff"/><rect x="310" y="451" width="1" height="33" fill="#ffffff"/><rect x="311" y="458" width="1" height="26" fill="#ffffff"/><rect x="312" y="459" width="1" height="25" fill="#ffffff"/><rect x="313" y="459" width="1" height="25" fill="#ffffff"/><rect x="314" y="461" width="1" height="23" fill="#ffffff"/><rect x="315" y="461" width="1" height="23" fill="#ffffff"/><rect x="316" y="467" width="1" height="17" fill="#ffffff"/><rect x="317" y="461" width="1" height="23" fill="#ffffff"/><rect x="318" y="461" width="1" height="23" fill="#ffffff"/><rect x="319" y="466" width="1" height="18" fill="#ffffff"/><rect x="320" y="469" width="1" height="15" fill="#ffffff"/><rect x="321" y="471" width="1" height="13" fill="#ffffff"/><rect x="322" y="471" width="1" height="13" fill="#ffffff"/><rect x="323" y="474" width="1" height="10" fill="#ffffff"/><rect x="324" y="477" width="1" height="7" fill="#ffffff"/><rect x="325" y="477" width="1" height="7" fill="#ffffff"/><rect x="326" y="471" width="1" height="13" fill="#ffffff"/><rect x="327" y="476" width="1" height="8" fill="#ffffff"/><rect x="328" y="476" width="1" height="8" fill="#ffffff"/><rect x="329" y="480" width="1" height="4" fill="#ffffff"/><rect x="330" y="480" width="1" height="4" fill="#ffffff"/><rect x="331" y="482" width="1" height="2" fill="#ffffff"/><rect x="332" y="478" width="1" height="6" fill="#ffffff"/><rect x="333" y="478" width="1" height="6" fill="#ffffff"/><rect x="334" y="473" width="1" height="11" fill="#ffffff"/><rect x="335" y="477" width="1" height="7" fill="#ffffff"/><rect x="336" y="481" width="1" height="3" fill="#ffffff"/><rect x="337" y="482" width="1" height="2" fill="#ffffff"/><rect x="338" y="482" width="1" height="2" fill="#ffffff"/><rect x="339" y="478" width="1" height="6" fill="#ffffff"/><rect x="340" y="477" width="1" height="7" fill="#ffffff"/><rect x="341" y="477" width="1" height="7" fill="#ffffff"/><rect x="342" y="477" width="1" height="7" fill="#ffffff"/><rect x="343" y="479" width="1" height="5" fill="#ffffff"/><rect x="344" y="482" width="1" height="2" fill="#ffffff"/><rect x="345" y="481" width="1" height="3" fill="#ffffff"/><rect x="346" y="482" width="1" height="2" fill="#ffffff"/><rect x="347" y="482" width="1" height="2" fill="#ffffff"/><rect x="348" y="474" width="1" height="10" fill="#ffffff"/><rect x="349" y="473" width="1" height="11" fill="#ffffff"/><rect x="350" y="475" width="1" height="9" fill="#ffffff"/><rect x="351" y="468" width="1" height="16" fill="#ffffff"/><rect x="352" y="460" width="1" height="24" fill="#ffffff"/><rect x="353" y="452" width="1" height="32" fill="#ffffff"/><rect x="354" y="452" width="1" height="32" fill="#ffffff"/><rect x="355" y="457" width="1" height="27" fill="#ffffff"/><rect x="356" y="451" width="1" height="33" fill="#ffffff"/><rect x="357" y="451" width="1" height="33" fill="#ffffff"/><rect x="358" y="455" width="1" height="29" fill="#ffffff"/><rect x="359" y="459" width="1" height="25" fill="#ffffff"/><rect x="360" y="460" width="1" height="24" fill="#ffffff"/><rect x="361" y="462" width="1" height="22" fill="#ffffff"/><rect x="362" y="462" width="1" height="22" fill="#ffffff"/><rect x="363" y="467" width="1" height="17" fill="#ffffff"/><rect x="364" y="461" width="1" height="23" fill="#ffffff"/><rect x="365" y="461" width="1" height="23" fill="#ffffff"/><rect x="366" y="466" width="1" height="18" fill="#ffffff"/><rect x="367" y="469" width="1" height="15" fill="#ffffff"/><rect x="368" y="471" width="1" height="13" fill="#ffffff"/><rect x="369" y="471" width="1" height="13" fill="#ffffff"/><rect x="370" y="473" width="1" height="11" fill="#ffffff"/><rect x="371" y="477" width="1" height="7" fill="#ffffff"/><rect x="372" y="471" width="1" height="13" fill="#ffffff"/><rect x="373" y="471" width="1" height="13" fill="#ffffff"/><rect x="374" y="476" width="1" height="8" fill="#ffffff"/><rect x="375" y="479" width="1" height="5" fill="#ffffff"/><rect x="376" y="481" width="1" height="3" fill="#ffffff"/><rect x="377" y="482" width="1" height="2" fill="#ffffff"/><rect x="378" y="482" width="1" height="2" fill="#ffffff"/><rect x="379" y="481" width="1" height="3" fill="#ffffff"/><rect x="380" y="474" width="1" height="10" fill="#ffffff"/><rect x="381" y="475" width="1" height="9" fill="#ffffff"/><rect x="382" y="480" width="1" height="4" fill="#ffffff"/><rect x="383" y="482" width="1" height="2" fill="#ffffff"/><rect x="384" y="482" width="1" height="2" fill="#ffffff"/><rect x="385" y="482" width="1" height="2" fill="#ffffff"/><rect x="386" y="481" width="1" height="3" fill="#ffffff"/><rect x="387" y="476" width="1" height="8" fill="#ffffff"/><rect x="388" y="474" width="1" height="10" fill="#ffffff"/><rect x="389" y="477" width="1" height="7" fill="#ffffff"/><rect x="390" y="477" width="1" height="7" fill="#ffffff"/><rect x="391" y="481" width="1" height="3" fill="#ffffff"/><rect x="392" y="481" width="1" height="3" fill="#ffffff"/><rect x="393" y="481" width="1" height="3" fill="#ffffff"/><rect x="394" y="474" width="1" height="10" fill="#ffffff"/><rect x="395" y="474" width="1" height="10" fill="#ffffff"/><rect x="396" y="472" width="1" height="12" fill="#ffffff"/><rect x="397" y="474" width="1" height="10" fill="#ffffff"/><rect x="398" y="467" width="1" height="17" fill="#ffffff"/><rect x="399" y="460" width="1" height="24" fill="#ffffff"/><rect x="400" y="452" width="1" height="32" fill="#ffffff"/><rect x="401" y="452" width="1" height="32" fill="#ffffff"/><rect x="402" y="457" width="1" height="27" fill="#ffffff"/><rect x="403" y="451" width="1" height="33" fill="#ffffff"/><rect x="404" y="451" width="1" height="33" fill="#ffffff"/><rect x="405" y="458" width="1" height="26" fill="#ffffff"/><rect x="406" y="460" width="1" height="24" fill="#ffffff"/><rect x="407" y="460" width="1" height="24" fill="#ffffff"/><rect x="408" y="462" width="1" height="22" fill="#ffffff"/><rect x="409" y="462" width="1" height="22" fill="#ffffff"/><rect x="410" y="467" width="1" height="17" fill="#ffffff"/><rect x="411" y="461" width="1" height="23" fill="#ffffff"/><rect x="412" y="461" width="1" height="23" fill="#ffffff"/><rect x="413" y="466" width="1" height="18" fill="#ffffff"/><rect x="414" y="469" width="1" height="15" fill="#ffffff"/><rect x="415" y="471" width="1" height="13" fill="#ffffff"/><rect x="416" y="471" width="1" height="13" fill="#ffffff"/><rect x="417" y="474" width="1" height="10" fill="#ffffff"/><rect x="418" y="477" width="1" height="7" fill="#ffffff"/><rect x="419" y="471" width="1" height="13" fill="#ffffff"/><rect x="420" y="471" width="1" height="13" fill="#ffffff"/><rect x="421" y="476" width="1" height="8" fill="#ffffff"/><rect x="422" y="480" width="1" height="4" fill="#ffffff"/><rect x="423" y="481" width="1" height="3" fill="#ffffff"/><rect x="424" y="480" width="1" height="4" fill="#ffffff"/><rect x="425" y="478" width="1" height="6" fill="#ffffff"/><rect x="426" y="478" width="1" height="6" fill="#ffffff"/><rect x="427" y="473" width="1" height="11" fill="#ffffff"/><rect x="428" y="474" width="1" height="10" fill="#ffffff"/><rect x="429" y="479" width="1" height="5" fill="#ffffff"/><rect x="430" y="481" width="1" height="3" fill="#ffffff"/><rect x="431" y="481" width="1" height="3" fill="#ffffff"/><rect x="432" y="481" width="1" height="3" fill="#ffffff"/><rect x="433" y="475" width="1" height="9" fill="#ffffff"/><rect x="434" y="475" width="1" height="9" fill="#ffffff"/><rect x="435" y="473" width="1" height="11" fill="#ffffff"/><rect x="436" y="475" width="1" height="9" fill="#ffffff"/><rect x="437" y="480" width="1" height="4" fill="#ffffff"/><rect x="438" y="481" width="1" height="3" fill="#ffffff"/><rect x="439" y="481" width="1" height="3" fill="#ffffff"/><rect x="440" y="481" width="1" height="3" fill="#ffffff"/><rect x="441" y="481" width="1" height="3" fill="#ffffff"/><rect x="442" y="475" width="1" height="9" fill="#ffffff"/><rect x="443" y="474" width="1" height="10" fill="#ffffff"/><rect x="444" y="472" width="1" height="12" fill="#ffffff"/><rect x="445" y="467" width="1" height="17" fill="#ffffff"/><rect x="446" y="460" width="1" height="24" fill="#ffffff"/><rect x="447" y="452" width="1" height="32" fill="#ffffff"/><rect x="448" y="452" width="1" height="32" fill="#ffffff"/><rect x="449" y="457" width="1" height="27" fill="#ffffff"/><rect x="450" y="451" width="1" height="33" fill="#ffffff"/><rect x="451" y="451" width="1" height="33" fill="#ffffff"/><rect x="452" y="456" width="1" height="28" fill="#ffffff"/><rect x="453" y="459" width="1" height="25" fill="#ffffff"/><rect x="454" y="461" width="1" height="23" fill="#ffffff"/><rect x="455" y="461" width="1" height="23" fill="#ffffff"/><rect x="456" y="462" width="1" height="22" fill="#ffffff"/><rect x="457" y="467" width="1" height="17" fill="#ffffff"/><rect x="458" y="461" width="1" height="23" fill="#ffffff"/><rect x="459" y="461" width="1" height="23" fill="#ffffff"/><rect x="460" y="458" width="1" height="26" fill="#ffffff"/><rect x="461" y="456" width="1" height="28" fill="#ffffff"/><rect x="462" y="462" width="1" height="22" fill="#ffffff"/><rect x="463" y="462" width="1" height="22" fill="#ffffff"/><rect x="464" y="463" width="1" height="21" fill="#ffffff"/><rect x="465" y="466" width="1" height="18" fill="#ffffff"/><rect x="466" y="460" width="1" height="24" fill="#ffffff"/><rect x="467" y="461" width="1" height="23" fill="#ffffff"/><rect x="468" y="466" width="1" height="18" fill="#ffffff"/><rect x="469" y="466" width="1" height="18" fill="#ffffff"/><rect x="470" y="470" width="1" height="14" fill="#ffffff"/><rect x="471" y="472" width="1" height="12" fill="#ffffff"/><rect x="472" y="475" width="1" height="9" fill="#ffffff"/><rect x="473" y="480" width="1" height="4" fill="#ffffff"/><rect x="474" y="480" width="1" height="4" fill="#ffffff"/><rect x="475" y="480" width="1" height="4" fill="#ffffff"/><rect x="476" y="481" width="1" height="3" fill="#ffffff"/><rect x="477" y="481" width="1" height="3" fill="#ffffff"/><rect x="478" y="481" width="1" height="3" fill="#ffffff"/><rect x="479" y="481" width="1" height="3" fill="#ffffff"/><rect x="480" y="481" width="1" height="3" fill="#ffffff"/><rect x="481" y="474" width="1" height="10" fill="#ffffff"/><rect x="482" y="473" width="1" height="11" fill="#ffffff"/><rect x="483" y="478" width="1" height="6" fill="#ffffff"/><rect x="484" y="481" width="1" height="3" fill="#ffffff"/><rect x="485" y="481" width="1" height="3" fill="#ffffff"/><rect x="486" y="481" width="1" height="3" fill="#ffffff"/><rect x="487" y="481" width="1" height="3" fill="#ffffff"/><rect x="488" y="481" width="1" height="3" fill="#ffffff"/><rect x="489" y="473" width="1" height="11" fill="#ffffff"/><rect x="490" y="473" width="1" height="11" fill="#ffffff"/><rect x="491" y="473" width="1" height="11" fill="#ffffff"/><rect x="492" y="466" width="1" height="18" fill="#ffffff"/><rect x="493" y="460" width="1" height="24" fill="#ffffff"/><rect x="494" y="452" width="1" height="32" fill="#ffffff"/><rect x="495" y="452" width="1" height="32" fill="#ffffff"/><rect x="496" y="457" width="1" height="27" fill="#ffffff"/><rect x="497" y="451" width="1" height="33" fill="#ffffff"/><rect x="498" y="451" width="1" height="33" fill="#ffffff"/><rect x="499" y="459" width="1" height="25" fill="#ffffff"/><rect x="500" y="459" width="1" height="25" fill="#ffffff"/><rect x="501" y="461" width="1" height="23" fill="#ffffff"/><rect x="502" y="461" width="1" height="23" fill="#ffffff"/><rect x="503" y="461" width="1" height="23" fill="#ffffff"/><rect x="504" y="466" width="1" height="18" fill="#ffffff"/><rect x="505" y="461" width="1" height="23" fill="#ffffff"/><rect x="506" y="461" width="1" height="23" fill="#ffffff"/><rect x="507" y="466" width="1" height="18" fill="#ffffff"/><rect x="508" y="469" width="1" height="15" fill="#ffffff"/><rect x="509" y="469" width="1" height="15" fill="#ffffff"/><rect x="510" y="471" width="1" height="13" fill="#ffffff"/><rect x="511" y="475" width="1" height="9" fill="#ffffff"/><rect x="512" y="476" width="1" height="8" fill="#ffffff"/><rect x="513" y="476" width="1" height="8" fill="#ffffff"/><rect x="514" y="471" width="1" height="13" fill="#ffffff"/><rect x="515" y="476" width="1" height="8" fill="#ffffff"/><rect x="516" y="480" width="1" height="4" fill="#ffffff"/><rect x="517" y="481" width="1" height="3" fill="#ffffff"/><rect x="518" y="481" width="1" height="3" fill="#ffffff"/><rect x="519" y="480" width="1" height="4" fill="#ffffff"/><rect x="520" y="476" width="1" height="8" fill="#ffffff"/><rect x="521" y="473" width="1" height="11" fill="#ffffff"/><rect x="522" y="473" width="1" height="11" fill="#ffffff"/><rect x="523" y="477" width="1" height="7" fill="#ffffff"/><rect x="524" y="481" width="1" height="3" fill="#ffffff"/><rect x="525" y="481" width="1" height="3" fill="#ffffff"/><rect x="526" y="480" width="1" height="4" fill="#ffffff"/><rect x="527" y="480" width="1" height="4" fill="#ffffff"/><rect x="528" y="473" width="1" height="11" fill="#ffffff"/><rect x="529" y="475" width="1" height="9" fill="#ffffff"/><rect x="530" y="477" width="1" height="7" fill="#ffffff"/><rect x="531" y="481" width="1" height="3" fill="#ffffff"/><rect x="532" y="481" width="1" height="3" fill="#ffffff"/><rect x="533" y="481" width="1" height="3" fill="#ffffff"/><rect x="534" y="481" width="1" height="3" fill="#ffffff"/><rect x="535" y="481" width="1" height="3" fill="#ffffff"/><rect x="536" y="473" width="1" height="11" fill="#ffffff"/><rect x="537" y="473" width="1" height="11" fill="#ffffff"/><rect x="538" y="473" width="1" height="11" fill="#ffffff"/><rect x="539" y="466" width="1" height="18" fill="#ffffff"/><rect x="540" y="459" width="1" height="25" fill="#ffffff"/><rect x="541" y="452" width="1" height="32" fill="#ffffff"/><rect x="542" y="452" width="1" height="32" fill="#ffffff"/><rect x="543" y="457" width="1" height="27" fill="#ffffff"/><rect x="544" y="451" width="1" height="33" fill="#ffffff"/><rect x="545" y="451" width="1" height="33" fill="#ffffff"/><rect x="546" y="457" width="1" height="27" fill="#ffffff"/><rect x="547" y="460" width="1" height="24" fill="#ffffff"/><rect x="548" y="460" width="1" height="24" fill="#ffffff"/><rect x="549" y="462" width="1" height="22" fill="#ffffff"/><rect x="550" y="462" width="1" height="22" fill="#ffffff"/><rect x="551" y="466" width="1" height="18" fill="#ffffff"/><rect x="552" y="461" width="1" height="23" fill="#ffffff"/><rect x="553" y="461" width="1" height="23" fill="#ffffff"/><rect x="554" y="466" width="1" height="18" fill="#ffffff"/><rect x="555" y="470" width="1" height="14" fill="#ffffff"/><rect x="556" y="472" width="1" height="12" fill="#ffffff"/><rect x="557" y="472" width="1" height="12" fill="#ffffff"/><rect x="558" y="474" width="1" height="10" fill="#ffffff"/><rect x="559" y="475" width="1" height="9" fill="#ffffff"/><rect x="560" y="471" width="1" height="13" fill="#ffffff"/><rect x="561" y="473" width="1" height="11" fill="#ffffff"/><rect x="562" y="477" width="1" height="7" fill="#ffffff"/><rect x="563" y="480" width="1" height="4" fill="#ffffff"/><rect x="564" y="481" width="1" height="3" fill="#ffffff"/><rect x="565" y="481" width="1" height="3" fill="#ffffff"/><rect x="566" y="481" width="1" height="3" fill="#ffffff"/><rect x="567" y="474" width="1" height="10" fill="#ffffff"/><rect x="568" y="473" width="1" height="11" fill="#ffffff"/><rect x="569" y="477" width="1" height="7" fill="#ffffff"/><rect x="570" y="477" width="1" height="7" fill="#ffffff"/><rect x="571" y="481" width="1" height="3" fill="#ffffff"/><rect x="572" y="481" width="1" height="3" fill="#ffffff"/><rect x="573" y="481" width="1" height="3" fill="#ffffff"/><rect x="574" y="481" width="1" height="3" fill="#ffffff"/><rect x="575" y="474" width="1" height="10" fill="#ffffff"/><rect x="576" y="472" width="1" height="12" fill="#ffffff"/><rect x="577" y="477" width="1" height="7" fill="#ffffff"/><rect x="578" y="481" width="1" height="3" fill="#ffffff"/><rect x="579" y="481" width="1" height="3" fill="#ffffff"/><rect x="580" y="481" width="1" height="3" fill="#ffffff"/><rect x="581" y="481" width="1" height="3" fill="#ffffff"/><rect x="582" y="480" width="1" height="4" fill="#ffffff"/><rect x="583" y="474" width="1" height="10" fill="#ffffff"/><rect x="584" y="472" width="1" height="12" fill="#ffffff"/><rect x="585" y="472" width="1" height="12" fill="#ffffff"/><rect x="586" y="465" width="1" height="19" fill="#ffffff"/><rect x="587" y="459" width="1" height="25" fill="#ffffff"/><rect x="588" y="452" width="1" height="32" fill="#ffffff"/><rect x="589" y="452" width="1" height="32" fill="#ffffff"/><rect x="590" y="457" width="1" height="27" fill="#ffffff"/><rect x="591" y="451" width="1" height="33" fill="#ffffff"/><rect x="592" y="451" width="1" height="33" fill="#ffffff"/><rect x="593" y="456" width="1" height="28" fill="#ffffff"/><rect x="594" y="459" width="1" height="25" fill="#ffffff"/><rect x="595" y="462" width="1" height="22" fill="#ffffff"/><rect x="596" y="462" width="1" height="22" fill="#ffffff"/><rect x="597" y="464" width="1" height="20" fill="#ffffff"/><rect x="598" y="464" width="1" height="20" fill="#ffffff"/><rect x="599" y="461" width="1" height="23" fill="#ffffff"/><rect x="600" y="461" width="1" height="23" fill="#ffffff"/><rect x="601" y="466" width="1" height="18" fill="#ffffff"/><rect x="602" y="469" width="1" height="15" fill="#ffffff"/><rect x="603" y="472" width="1" height="12" fill="#ffffff"/><rect x="604" y="474" width="1" height="10" fill="#ffffff"/><rect x="605" y="476" width="1" height="8" fill="#ffffff"/><rect x="606" y="476" width="1" height="8" fill="#ffffff"/><rect x="607" y="471" width="1" height="13" fill="#ffffff"/><rect x="608" y="474" width="1" height="10" fill="#ffffff"/><rect x="609" y="477" width="1" height="7" fill="#ffffff"/><rect x="610" y="480" width="1" height="4" fill="#ffffff"/><rect x="611" y="481" width="1" height="3" fill="#ffffff"/><rect x="612" y="481" width="1" height="3" fill="#ffffff"/><rect x="613" y="481" width="1" height="3" fill="#ffffff"/><rect x="614" y="474" width="1" height="10" fill="#ffffff"/><rect x="615" y="473" width="1" height="11" fill="#ffffff"/><rect x="616" y="479" width="1" height="5" fill="#ffffff"/><rect x="617" y="481" width="1" height="3" fill="#ffffff"/><rect x="618" y="481" width="1" height="3" fill="#ffffff"/><rect x="619" y="481" width="1" height="3" fill="#ffffff"/><rect x="620" y="481" width="1" height="3" fill="#ffffff"/><rect x="621" y="481" width="1" height="3" fill="#ffffff"/><rect x="622" y="473" width="1" height="11" fill="#ffffff"/><rect x="623" y="473" width="1" height="11" fill="#ffffff"/><rect x="624" y="477" width="1" height="7" fill="#ffffff"/><rect x="625" y="481" width="1" height="3" fill="#ffffff"/><rect x="626" y="481" width="1" height="3" fill="#ffffff"/><rect x="627" y="481" width="1" height="3" fill="#ffffff"/><rect x="628" y="481" width="1" height="3" fill="#ffffff"/><rect x="629" y="481" width="1" height="3" fill="#ffffff"/><rect x="630" y="472" width="1" height="12" fill="#ffffff"/><rect x="631" y="471" width="1" height="13" fill="#ffffff"/><rect x="632" y="471" width="1" height="13" fill="#ffffff"/><rect x="633" y="465" width="1" height="19" fill="#ffffff"/><rect x="634" y="459" width="1" height="25" fill="#ffffff"/><rect x="635" y="452" width="1" height="32" fill="#ffffff"/><rect x="636" y="452" width="1" height="32" fill="#ffffff"/><rect x="637" y="457" width="1" height="27" fill="#ffffff"/><rect x="638" y="451" width="1" height="33" fill="#ffffff"/><rect x="639" y="451" width="1" height="33" fill="#ffffff"/><rect x="640" y="456" width="1" height="28" fill="#ffffff"/><rect x="641" y="459" width="1" height="25" fill="#ffffff"/><rect x="642" y="462" width="1" height="22" fill="#ffffff"/><rect x="643" y="462" width="1" height="22" fill="#ffffff"/><rect x="644" y="462" width="1" height="22" fill="#ffffff"/><rect x="645" y="465" width="1" height="19" fill="#ffffff"/><rect x="646" y="459" width="1" height="25" fill="#ffffff"/><rect x="647" y="456" width="1" height="28" fill="#ffffff"/><rect x="648" y="456" width="1" height="28" fill="#ffffff"/><rect x="649" y="458" width="1" height="26" fill="#ffffff"/><rect x="650" y="461" width="1" height="23" fill="#ffffff"/><rect x="651" y="461" width="1" height="23" fill="#ffffff"/><rect x="652" y="464" width="1" height="20" fill="#ffffff"/><rect x="653" y="461" width="1" height="23" fill="#ffffff"/><rect x="654" y="460" width="1" height="24" fill="#ffffff"/><rect x="655" y="462" width="1" height="22" fill="#ffffff"/><rect x="656" y="467" width="1" height="17" fill="#ffffff"/><rect x="657" y="471" width="1" height="13" fill="#ffffff"/><rect x="658" y="471" width="1" height="13" fill="#ffffff"/><rect x="659" y="471" width="1" height="13" fill="#ffffff"/><rect x="660" y="476" width="1" height="8" fill="#ffffff"/><rect x="661" y="476" width="1" height="8" fill="#ffffff"/><rect x="662" y="479" width="1" height="5" fill="#ffffff"/><rect x="663" y="479" width="1" height="5" fill="#ffffff"/><rect x="664" y="482" width="1" height="2" fill="#ffffff"/><rect x="665" y="481" width="1" height="3" fill="#ffffff"/><rect x="666" y="481" width="1" height="3" fill="#ffffff"/><rect x="667" y="481" width="1" height="3" fill="#ffffff"/><rect x="668" y="480" width="1" height="4" fill="#ffffff"/><rect x="669" y="473" width="1" height="11" fill="#ffffff"/><rect x="670" y="473" width="1" height="11" fill="#ffffff"/><rect x="156" y="483" width="1" height="1" fill="#ff0000"/><rect x="157" y="483" width="1" height="1" fill="#ff0000"/><rect x="158" y="483" width="1" height="1" fill="#ff0000"/><rect x="159" y="483" width="1" height="1" fill="#ff0000"/><rect x="160" y="483" width="1" height="1" fill="#ff0000"/><rect x="188" y="483" width="1" height="1" fill="#ff0000"/><rect x="189" y="483" width="1" height="1" fill="#ff0000"/><rect x="190" y="483" width="1" height="1" fill="#ff0000"/><rect x="191" y="483" width="1" height="1" fill="#ff0000"/><rect x="196" y="483" width="1" height="1" fill="#ff0000"/><rect x="197" y="483" width="1" height="1" fill="#ff0000"/><rect x="198" y="483" width="1" height="1" fill="#ff0000"/><rect x="199" y="483" width="1" height="1" fill="#ff0000"/><rect x="203" y="483" width="1" height="1" fill="#ff0000"/><rect x="204" y="483" width="1" height="1" fill="#ff0000"/><rect x="205" y="483" width="1" height="1" fill="#ff0000"/><rect x="206" y="483" width="1" height="1" fill="#ff0000"/><rect x="207" y="483" width="1" height="1" fill="#ff0000"/><rect x="211" y="483" width="1" height="1" fill="#ff0000"/><rect x="212" y="483" width="1" height="1" fill="#ff0000"/><rect x="213" y="483" width="1" height="1" fill="#ff0000"/><rect x="214" y="483" width="1" height="1" fill="#ff0000"/><rect x="215" y="483" width="1" height="1" fill="#ff0000"/><rect x="219" y="483" width="1" height="1" fill="#ff0000"/><rect x="220" y="483" width="1" height="1" fill="#ff0000"/><rect x="221" y="483" width="1" height="1" fill="#ff0000"/><rect x="222" y="483" width="1" height="1" fill="#ff0000"/><rect x="253" y="483" width="1" height="1" fill="#ff0000"/><rect x="254" y="483" width="1" height="1" fill="#ff0000"/><rect x="288" y="483" width="1" height="1" fill="#ff0000"/><rect x="289" y="483" width="1" height="1" fill="#ff0000"/><rect x="290" y="483" width="1" height="1" fill="#ff0000"/><rect x="291" y="483" width="1" height="1" fill="#ff0000"/><rect x="292" y="483" width="1" height="1" fill="#ff0000"/><rect x="293" y="483" width="1" height="1" fill="#ff0000"/><rect x="297" y="483" width="1" height="1" fill="#ff0000"/><rect x="298" y="483" width="1" height="1" fill="#ff0000"/><rect x="299" y="483" width="1" height="1" fill="#ff0000"/><rect x="300" y="483" width="1" height="1" fill="#ff0000"/><rect x="301" y="483" width="1" height="1" fill="#ff0000"/><rect x="331" y="483" width="1" height="1" fill="#ff0000"/><rect x="332" y="483" width="1" height="1" fill="#ff0000"/><rect x="336" y="483" width="1" height="1" fill="#ff0000"/><rect x="337" y="483" width="1" height="1" fill="#ff0000"/><rect x="338" y="483" width="1" height="1" fill="#ff0000"/><rect x="339" y="483" width="1" height="1" fill="#ff0000"/><rect x="340" y="483" width="1" height="1" fill="#ff0000"/><rect x="343" y="483" width="1" height="1" fill="#ff0000"/><rect x="344" y="483" width="1" height="1" fill="#ff0000"/><rect x="345" y="483" width="1" height="1" fill="#ff0000"/><rect x="346" y="483" width="1" height="1" fill="#ff0000"/><rect x="347" y="483" width="1" height="1" fill="#ff0000"/><rect x="348" y="483" width="1" height="1" fill="#ff0000"/><rect x="376" y="483" width="1" height="1" fill="#ff0000"/><rect x="377" y="483" width="1" height="1" fill="#ff0000"/><rect x="378" y="483" width="1" height="1" fill="#ff0000"/><rect x="379" y="483" width="1" height="1" fill="#ff0000"/><rect x="383" y="483" width="1" height="1" fill="#ff0000"/><rect x="384" y="483" width="1" height="1" fill="#ff0000"/><rect x="385" y="483" width="1" height="1" fill="#ff0000"/><rect x="386" y="483" width="1" height="1" fill="#ff0000"/><rect x="387" y="483" width="1" height="1" fill="#ff0000"/><rect x="391" y="483" width="1" height="1" fill="#ff0000"/><rect x="392" y="483" width="1" height="1" fill="#ff0000"/><rect x="393" y="483" width="1" height="1" fill="#ff0000"/><rect x="394" y="483" width="1" height="1" fill="#ff0000"/><rect x="425" y="483" width="1" height="1" fill="#ff0000"/><rect x="426" y="483" width="1" height="1" fill="#ff0000"/><rect x="430" y="483" width="1" height="1" fill="#ff0000"/><rect x="431" y="483" width="1" height="1" fill="#ff0000"/><rect x="432" y="483" width="1" height="1" fill="#ff0000"/><rect x="433" y="483" width="1" height="1" fill="#ff0000"/><rect x="434" y="483" width="1" height="1" fill="#ff0000"/><rect x="438" y="483" width="1" height="1" fill="#ff0000"/><rect x="439" y="483" width="1" height="1" fill="#ff0000"/><rect x="440" y="483" width="1" height="1" fill="#ff0000"/><rect x="441" y="483" width="1" height="1" fill="#ff0000"/><rect x="477" y="483" width="1" height="1" fill="#ff0000"/><rect x="478" y="483" width="1" height="1" fill="#ff0000"/><rect x="479" y="483" width="1" height="1" fill="#ff0000"/><rect x="480" y="483" width="1" height="1" fill="#ff0000"/><rect x="485" y="483" width="1" height="1" fill="#ff0000"/><rect x="486" y="483" width="1" height="1" fill="#ff0000"/><rect x="487" y="483" width="1" height="1" fill="#ff0000"/><rect x="488" y="483" width="1" height="1" fill="#ff0000"/><rect x="519" y="483" width="1" height="1" fill="#ff0000"/><rect x="520" y="483" width="1" height="1" fill="#ff0000"/><rect x="524" y="483" width="1" height="1" fill="#ff0000"/><rect x="525" y="483" width="1" height="1" fill="#ff0000"/><rect x="526" y="483" width="1" height="1" fill="#ff0000"/><rect x="527" y="483" width="1" height="1" fill="#ff0000"/><rect x="532" y="483" width="1" height="1" fill="#ff0000"/><rect x="533" y="483" width="1" height="1" fill="#ff0000"/><rect x="534" y="483" width="1" height="1" fill="#ff0000"/><rect x="535" y="483" width="1" height="1" fill="#ff0000"/><rect x="564" y="483" width="1" height="1" fill="#ff0000"/><rect x="565" y="483" width="1" height="1" fill="#ff0000"/><rect x="566" y="483" width="1" height="1" fill="#ff0000"/><rect x="567" y="483" width="1" height="1" fill="#ff0000"/><rect x="571" y="483" width="1" height="1" fill="#ff0000"/><rect x="572" y="483" width="1" height="1" fill="#ff0000"/><rect x="573" y="483" width="1" height="1" fill="#ff0000"/><rect x="581" y="483" width="1" height="1" fill="#ff0000"/><rect x="582" y="483" width="1" height="1" fill="#ff0000"/><rect x="612" y="483" width="1" height="1" fill="#ff0000"/><rect x="613" y="483" width="1" height="1" fill="#ff0000"/><rect x="618" y="483" width="1" height="1" fill="#ff0000"/><rect x="619" y="483" width="1" height="1" fill="#ff0000"/><rect x="620" y="483" width="1" height="1" fill="#ff0000"/><rect x="621" y="483" width="1" height="1" fill="#ff0000"/><rect x="626" y="483" width="1" height="1" fill="#ff0000"/><rect x="627" y="483" width="1" height="1" fill="#ff0000"/><rect x="628" y="483" width="1" height="1" fill="#ff0000"/><rect x="629" y="483" width="1" height="1" fill="#ff0000"/><rect x="664" y="483" width="1" height="1" fill="#ff0000"/><rect x="665" y="483" width="1" height="1" fill="#ff0000"/><rect x="666" y="483" width="1" height="1" fill="#ff0000"/><rect x="667" y="483" width="1" height="1" fill="#ff0000"/><rect x="668" y="483" width="1" height="1" fill="#ff0000"/><path d="M94.38 6.51 L93.27 6.84 L92.53 7.84 L92.16 9.50 L92.16 10.50 L92.53 12.17 L93.27 13.17 L94.38 13.50 L95.12 13.50 L96.23 13.17 L96.97 12.17 L97.34 10.50 L97.34 9.50 L96.97 7.84 L96.23 6.84 L95.12 6.51 L94.38 6.51 M101.78 6.51 L100.67 6.84 L99.93 7.84 L99.56 9.50 L99.56 10.50 L99.93 12.17 L100.67 13.17 L101.78 13.50 L102.52 13.50 L103.63 13.17 L104.37 12.17 L104.74 10.50 L104.74 9.50 L104.37 7.84 L103.63 6.84 L102.52 6.51 L101.78 6.51 M107.70 8.84 L107.33 9.17 L107.70 9.50 L108.07 9.17 L107.70 8.84 M107.70 12.83 L107.33 13.17 L107.70 13.50 L108.07 13.17 L107.70 12.83 M112.88 6.51 L111.77 6.84 L111.03 7.84 L110.66 9.50 L110.66 10.50 L111.03 12.17 L111.77 13.17 L112.88 13.50 L113.62 13.50 L114.73 13.17 L115.47 12.17 L115.84 10.50 L115.84 9.50 L115.47 7.84 L114.73 6.84 L113.62 6.51 L112.88 6.51 M120.28 6.51 L119.17 6.84 L118.43 7.84 L118.06 9.50 L118.06 10.50 L118.43 12.17 L119.17 13.17 L120.28 13.50 L121.02 13.50 L122.13 13.17 L122.87 12.17 L123.24 10.50 L123.24 9.50 L122.87 7.84 L122.13 6.84 L121.02 6.51 L120.28 6.51" stroke="#ffffff" stroke-width="1" fill="none"/><path d="M94.38 494.51 L93.27 494.84 L92.53 495.84 L92.16 497.50 L92.16 498.50 L92.53 500.17 L93.27 501.17 L94.38 501.50 L95.12 501.50 L96.23 501.17 L96.97 500.17 L97.34 498.50 L97.34 497.50 L96.97 495.84 L96.23 494.84 L95.12 494.51 L94.38 494.51 M101.78 494.51 L100.67 494.84 L99.93 495.84 L99.56 497.50 L99.56 498.50 L99.93 500.17 L100.67 501.17 L101.78 501.50 L102.52 501.50 L103.63 501.17 L104.37 500.17 L104.74 498.50 L104.74 497.50 L104.37 495.84 L103.63 494.84 L102.52 494.51 L101.78 494.51 M107.70 496.84 L107.33 497.17 L107.70 497.50 L108.07 497.17 L107.70 496.84 M107.70 500.83 L107.33 501.17 L107.70 501.50 L108.07 501.17 L107.70 500.83 M112.88 494.51 L111.77 494.84 L111.03 495.84 L110.66 497.50 L110.66 498.50 L111.03 500.17 L111.77 501.17 L112.88 501.50 L113.62 501.50 L114.73 501.17 L115.47 500.17 L115.84 498.50 L115.84 497.50 L115.47 495.84 L114.73 494.84 L113.62 494.51 L112.88 494.51 M120.28 494.51 L119.17 494.84 L118.43 495.84 L118.06 497.50 L118.06 498.50 L118.43 500.17 L119.17 501.17 L120.28 501.50 L121.02 501.50 L122.13 501.17 L122.87 500.17 L123.24 498.50 L123.24 497.50 L122.87 495.84 L122.13 494.84 L121.02 494.51 L120.28 494.51" stroke="#ffffff" stroke-width="1" fill="none"/><path d="M248.92 8.17 L248.92 7.84 L249.29 7.17 L249.66 6.84 L250.40 6.51 L251.88 6.51 L252.62 6.84 L252.99 7.17 L253.36 7.84 L253.36 8.50 L252.99 9.17 L252.25 10.17 L248.55 13.50 L253.73 13.50 M258.17 6.51 L257.06 6.84 L256.32 7.84 L255.95 9.50 L255.95 10.50 L256.32 12.17 L257.06 13.17 L258.17 13.50 L258.91 13.50 L260.02 13.17 L260.76 12.17 L261.13 10.50 L261.13 9.50 L260.76 7.84 L260.02 6.84 L258.91 6.51 L258.17 6.51 M264.09 8.84 L263.72 9.17 L264.09 9.50 L264.46 9.17 L264.09 8.84 M264.09 12.83 L263.72 13.17 L264.09 13.50 L264.46 13.17 L264.09 12.83 M269.27 6.51 L268.16 6.84 L267.42 7.84 L267.05 9.50 L267.05 10.50 L267.42 12.17 L268.16 13.17 L269.27 13.50 L270.01 13.50 L271.12 13.17 L271.86 12.17 L272.23 10.50 L272.23 9.50 L271.86 7.84 L271.12 6.84 L270.01 6.51 L269.27 6.51 M276.67 6.51 L275.56 6.84 L274.82 7.84 L274.45 9.50 L274.45 10.50 L274.82 12.17 L275.56 13.17 L276.67 13.50 L277.41 13.50 L278.52 13.17 L279.26 12.17 L279.63 10.50 L279.63 9.50 L279.26 7.84 L278.52 6.84 L277.41 6.51 L276.67 6.51" stroke="#ffffff" stroke-width="1" fill="none"/><path d="M248.92 496.17 L248.92 495.84 L249.29 495.17 L249.66 494.84 L250.40 494.51 L251.88 494.51 L252.62 494.84 L252.99 495.17 L253.36 495.84 L253.36 496.50 L252.99 497.17 L252.25 498.17 L248.55 501.50 L253.73 501.50 M258.17 494.51 L257.06 494.84 L256.32 495.84 L255.95 497.50 L255.95 498.50 L256.32 500.17 L257.06 501.17 L258.17 501.50 L258.91 501.50 L260.02 501.17 L260.76 500.17 L261.13 498.50 L261.13 497.50 L260.76 495.84 L260.02 494.84 L258.91 494.51 L258.17 494.51 M264.09 496.84 L263.72 497.17 L264.09 497.50 L264.46 497.17 L264.09 496.84 M264.09 500.83 L263.72 501.17 L264.09 501.50 L264.46 501.17 L264.09 500.83 M269.27 494.51 L268.16 494.84 L267.42 495.84 L267.05 497.50 L267.05 498.50 L267.42 500.17 L268.16 501.17 L269.27 501.50 L270.01 501.50 L271.12 501.17 L271.86 500.17 L272.23 498.50 L272.23 497.50 L271.86 495.84 L271.12 494.84 L270.01 494.51 L269.27 494.51 M276.67 494.51 L275.56 494.84 L274.82 495.84 L274.45 497.50 L274.45 498.50 L274.82 500.17 L275.56 501.17 L276.67 501.50 L277.41 501.50 L278.52 501.17 L279.26 500.17 L279.63 498.50 L279.63 497.50 L279.26 495.84 L278.52 494.84 L277.41 494.51 L276.67 494.51" stroke="#ffffff" stroke-width="1" fill="none"/><path d="M406.05 7.84 L406.79 7.51 L407.90 6.51 L407.90 13.50 M417.15 7.51 L416.78 6.84 L415.67 6.51 L414.93 6.51 L413.82 6.84 L413.08 7.84 L412.71 9.50 L412.71 11.17 L413.08 12.50 L413.82 13.17 L414.93 13.50 L415.30 13.50 L416.41 13.17 L417.15 12.50 L417.52 11.50 L417.52 11.17 L417.15 10.17 L416.41 9.50 L415.30 9.17 L414.93 9.17 L413.82 9.50 L413.08 10.17 L412.71 11.17 M420.48 8.84 L420.11 9.17 L420.48 9.50 L420.85 9.17 L420.48 8.84 M420.48 12.83 L420.11 13.17 L420.48 13.50 L420.85 13.17 L420.48 12.83 M425.66 6.51 L424.55 6.84 L423.81 7.84 L423.44 9.50 L423.44 10.50 L423.81 12.17 L424.55 13.17 L425.66 13.50 L426.40 13.50 L427.51 13.17 L428.25 12.17 L428.62 10.50 L428.62 9.50 L428.25 7.84 L427.51 6.84 L426.40 6.51 L425.66 6.51 M433.06 6.51 L431.95 6.84 L431.21 7.84 L430.84 9.50 L430.84 10.50 L431.21 12.17 L431.95 13.17 L433.06 13.50 L433.80 13.50 L434.91 13.17 L435.65 12.17 L436.02 10.50 L436.02 9.50 L435.65 7.84 L434.91 6.84 L433.80 6.51 L433.06 6.51" stroke="#ffffff" stroke-width="1" fill="none"/><path d="M406.05 495.84 L406.79 495.51 L407.90 494.51 L407.90 501.50 M417.15 495.51 L416.78 494.84 L415.67 494.51 L414.93 494.51 L413.82 494.84 L413.08 495.84 L412.71 497.50 L412.71 499.17 L413.08 500.50 L413.82 501.17 L414.93 501.50 L415.30 501.50 L416.41 501.17 L417.15 500.50 L417.52 499.50 L417.52 499.17 L417.15 498.17 L416.41 497.50 L415.30 497.17 L414.93 497.17 L413.82 497.50 L413.08 498.17 L412.71 499.17 M420.48 496.84 L420.11 497.17 L420.48 497.50 L420.85 497.17 L420.48 496.84 M420.48 500.83 L420.11 501.17 L420.48 501.50 L420.85 501.17 L420.48 500.83 M425.66 494.51 L424.55 494.84 L423.81 495.84 L423.44 497.50 L423.44 498.50 L423.81 500.17 L424.55 501.17 L425.66 501.50 L426.40 501.50 L427.51 501.17 L428.25 500.17 L428.62 498.50 L428.62 497.50 L428.25 495.84 L427.51 494.84 L426.40 494.51 L425.66 494.51 M433.06 494.51 L431.95 494.84 L431.21 495.84 L430.84 497.50 L430.84 498.50 L431.21 500.17 L431.95 501.17 L433.06 501.50 L433.80 501.50 L434.91 501.17 L435.65 500.17 L436.02 498.50 L436.02 497.50 L435.65 495.84 L434.91 494.84 L433.80 494.51 L433.06 494.51" stroke="#ffffff" stroke-width="1" fill="none"/><path d="M562.44 7.84 L563.18 7.51 L564.29 6.51 L564.29 13.50 M569.10 8.17 L569.10 7.84 L569.47 7.17 L569.84 6.84 L570.58 6.51 L572.06 6.51 L572.80 6.84 L573.17 7.17 L573.54 7.84 L573.54 8.50 L573.17 9.17 L572.43 10.17 L568.73 13.50 L573.91 13.50 M576.87 8.84 L576.50 9.17 L576.87 9.50 L577.24 9.17 L576.87 8.84 M576.87 12.83 L576.50 13.17 L576.87 13.50 L577.24 13.17 L576.87 12.83 M582.05 6.51 L580.94 6.84 L580.20 7.84 L579.83 9.50 L579.83 10.50 L580.20 12.17 L580.94 13.17 L582.05 13.50 L582.79 13.50 L583.90 13.17 L584.64 12.17 L585.01 10.50 L585.01 9.50 L584.64 7.84 L583.90 6.84 L582.79 6.51 L582.05 6.51 M589.45 6.51 L588.34 6.84 L587.60 7.84 L587.23 9.50 L587.23 10.50 L587.60 12.17 L588.34 13.17 L589.45 13.50 L590.19 13.50 L591.30 13.17 L592.04 12.17 L592.41 10.50 L592.41 9.50 L592.04 7.84 L591.30 6.84 L590.19 6.51 L589.45 6.51" stroke="#ffffff" stroke-width="1" fill="none"/><path d="M562.44 495.84 L563.18 495.51 L564.29 494.51 L564.29 501.50 M569.10 496.17 L569.10 495.84 L569.47 495.17 L569.84 494.84 L570.58 494.51 L572.06 494.51 L572.80 494.84 L573.17 495.17 L573.54 495.84 L573.54 496.50 L573.17 497.17 L572.43 498.17 L568.73 501.50 L573.91 501.50 M576.87 496.84 L576.50 497.17 L576.87 497.50 L577.24 497.17 L576.87 496.84 M576.87 500.83 L576.50 501.17 L576.87 501.50 L577.24 501.17 L576.87 500.83 M582.05 494.51 L580.94 494.84 L580.20 495.84 L579.83 497.50 L579.83 498.50 L580.20 500.17 L580.94 501.17 L582.05 501.50 L582.79 501.50 L583.90 501.17 L584.64 500.17 L585.01 498.50 L585.01 497.50 L584.64 495.84 L583.90 494.84 L582.79 494.51 L582.05 494.51 M589.45 494.51 L588.34 494.84 L587.60 495.84 L587.23 497.50 L587.23 498.50 L587.60 500.17 L588.34 501.17 L589.45 501.50 L590.19 501.50 L591.30 501.17 L592.04 500.17 L592.41 498.50 L592.41 497.50 L592.04 495.84 L591.30 494.84 L590.19 494.51 L589.45 494.51" stroke="#ffffff" stroke-width="1" fill="none"/><path d="M102.48 69.04 L103.24 68.66 L104.38 67.52 L104.38 75.50" stroke="#ffffff" stroke-width="1" fill="none"/><path d="M101.72 60.17 L101.72 59.79 L102.10 59.03 L102.48 58.65 L103.24 58.27 L104.76 58.27 L105.52 58.65 L105.90 59.03 L106.28 59.79 L106.28 60.55 L105.90 61.31 L105.14 62.45 L101.34 66.25 L106.66 66.25" stroke="#ffffff" stroke-width="1" fill="none"/><path d="M102.10 49.02 L106.28 49.02 L104.00 52.06 L105.14 52.06 L105.90 52.44 L106.28 52.82 L106.66 53.96 L106.66 54.72 L106.28 55.86 L105.52 56.62 L104.38 57.00 L103.24 57.00 L102.10 56.62 L101.72 56.24 L101.34 55.48" stroke="#ffffff" stroke-width="1" fill="none"/><path d="M105.14 39.77 L101.34 45.09 L107.04 45.09 M105.14 39.77 L105.14 47.75" stroke="#ffffff" stroke-width="1" fill="none"/><path d="M105.90 30.52 L102.10 30.52 L101.72 33.94 L102.10 33.56 L103.24 33.18 L104.38 33.18 L105.52 33.56 L106.28 34.32 L106.66 35.46 L106.66 36.22 L106.28 37.36 L105.52 38.12 L104.38 38.50 L103.24 38.50 L102.10 38.12 L101.72 37.74 L101.34 36.98" stroke="#ffffff" stroke-width="1" fill="none"/><path d="M20.95 53.52 L20.95 61.50 M18.30 53.52 L23.59 53.52 M25.48 53.52 L25.48 61.50 M25.48 53.52 L28.51 61.50 M31.53 53.52 L28.51 61.50 M31.53 53.52 L31.53 61.50 M45.52 54.66 L44.76 53.90 L43.63 53.52 L42.11 53.52 L40.98 53.90 L40.22 54.66 L40.22 55.42 L40.60 56.18 L40.98 56.56 L41.74 56.94 L44.00 57.70 L44.76 58.08 L45.14 58.46 L45.52 59.22 L45.52 60.36 L44.76 61.12 L43.63 61.50 L42.11 61.50 L40.98 61.12 L40.22 60.36 M48.16 53.52 L48.16 59.22 L48.54 60.36 L49.30 61.12 L50.43 61.50 L51.19 61.50 L52.32 61.12 L53.08 60.36 L53.45 59.22 L53.45 53.52 M56.48 53.52 L56.48 61.50 M56.48 53.52 L59.88 53.52 L61.01 53.90 L61.39 54.28 L61.77 55.04 L61.77 55.80 L61.39 56.56 L61.01 56.94 L59.88 57.32 M56.48 57.32 L59.88 57.32 L61.01 57.70 L61.39 58.08 L61.77 58.84 L61.77 59.98 L61.39 60.74 L61.01 61.12 L59.88 61.50 L56.48 61.50 M64.42 53.52 L64.42 61.50 M64.42 53.52 L67.44 61.50 M70.46 53.52 L67.44 61.50 M70.46 53.52 L70.46 61.50 M75.38 53.52 L74.62 53.90 L73.87 54.66 L73.49 55.42 L73.11 56.56 L73.11 58.46 L73.49 59.60 L73.87 60.36 L74.62 61.12 L75.38 61.50 L76.89 61.50 L77.65 61.12 L78.40 60.36 L78.78 59.60 L79.16 58.46 L79.16 56.56 L78.78 55.42 L78.40 54.66 L77.65 53.90 L76.89 53.52 L75.38 53.52 M81.80 53.52 L81.80 61.50 M81.80 53.52 L84.45 53.52 L85.58 53.90 L86.34 54.66 L86.72 55.42 L87.10 56.56 L87.10 58.46 L86.72 59.60 L86.34 60.36 L85.58 61.12 L84.45 61.50 L81.80 61.50 M89.74 53.52 L89.74 61.50 M89.74 53.52 L94.66 53.52 M89.74 57.32 L92.77 57.32 M89.74 61.50 L94.66 61.50" stroke="#ffffff" stroke-width="1" fill="none"/><path d="M8.50 100.52 L8.50 108.50 M8.50 108.50 L13.10 108.50 M16.93 100.52 L13.86 108.50 M16.93 100.52 L19.99 108.50 M15.01 105.84 L18.84 105.84 M26.88 101.66 L26.12 100.90 L24.97 100.52 L23.44 100.52 L22.29 100.90 L21.52 101.66 L21.52 102.42 L21.90 103.18 L22.29 103.56 L23.05 103.94 L25.35 104.70 L26.12 105.08 L26.50 105.46 L26.88 106.22 L26.88 107.36 L26.12 108.12 L24.97 108.50 L23.44 108.50 L22.29 108.12 L21.52 107.36 M34.93 102.42 L34.54 101.66 L33.78 100.90 L33.01 100.52 L31.48 100.52 L30.71 100.90 L29.95 101.66 L29.56 102.42 L29.18 103.56 L29.18 105.46 L29.56 106.60 L29.95 107.36 L30.71 108.12 L31.48 108.50 L33.01 108.50 L33.78 108.12 L34.54 107.36 L34.93 106.60 M39.52 100.52 L38.76 100.90 L37.99 101.66 L37.61 102.42 L37.22 103.56 L37.22 105.46 L37.61 106.60 L37.99 107.36 L38.76 108.12 L39.52 108.50 L41.05 108.50 L41.82 108.12 L42.59 107.36 L42.97 106.60 L43.35 105.46 L43.35 103.56 L42.97 102.42 L42.59 101.66 L41.82 100.90 L41.05 100.52 L39.52 100.52 M52.16 99.00 L45.27 111.16 M54.46 100.52 L54.46 108.50 M54.46 100.52 L59.44 100.52 M54.46 104.32 L57.52 104.32 M54.46 108.50 L59.44 108.50 M61.74 100.52 L61.74 108.50 M66.33 100.52 L66.33 108.50 M63.65 100.52 L69.01 100.52 M79.74 99.00 L78.97 99.76 L78.21 100.90 L77.44 102.42 L77.06 104.32 L77.06 105.84 L77.44 107.74 L78.21 109.26 L78.97 110.40 L79.74 111.16 M84.33 100.52 L83.57 100.90 L82.80 101.66 L82.42 102.42 L82.04 103.56 L82.04 105.46 L82.42 106.60 L82.80 107.36 L83.57 108.12 L84.33 108.50 L85.87 108.50 L86.63 108.12 L87.40 107.36 L87.78 106.60 L88.16 105.46 L88.16 103.56 L87.78 102.42 L87.40 101.66 L86.63 100.90 L85.87 100.52 L84.33 100.52 M90.84 100.52 L90.84 108.50 M90.84 100.52 L94.29 100.52 L95.44 100.90 L95.82 101.28 L96.21 102.04 L96.21 103.18 L95.82 103.94 L95.44 104.32 L94.29 104.70 L90.84 104.70 M98.50 99.00 L99.27 99.76 L100.04 100.90 L100.80 102.42 L101.19 104.32 L101.19 105.84 L100.80 107.74 L100.04 109.26 L99.27 110.40 L98.50 111.16" stroke="#ffffff" stroke-width="1" fill="none"/><path d="M51.93 141.52 L51.16 141.90 L50.39 142.66 L50.01 143.42 L49.62 144.56 L49.62 146.46 L50.01 147.60 L50.39 148.36 L51.16 149.12 L51.93 149.50 L53.47 149.50 L54.24 149.12 L55.01 148.36 L55.40 147.60 L55.78 146.46 L55.78 144.56 L55.40 143.42 L55.01 142.66 L54.24 141.90 L53.47 141.52 L51.93 141.52 M63.48 142.66 L62.71 141.90 L61.56 141.52 L60.02 141.52 L58.86 141.90 L58.09 142.66 L58.09 143.42 L58.48 144.18 L58.86 144.56 L59.63 144.94 L61.94 145.70 L62.71 146.08 L63.10 146.46 L63.48 147.22 L63.48 148.36 L62.71 149.12 L61.56 149.50 L60.02 149.50 L58.86 149.12 L58.09 148.36 M64.64 149.50 L70.80 149.50 M72.72 141.52 L76.96 141.52 L74.65 144.56 L75.80 144.56 L76.57 144.94 L76.96 145.32 L77.34 146.46 L77.34 147.22 L76.96 148.36 L76.19 149.12 L75.03 149.50 L73.88 149.50 L72.72 149.12 L72.34 148.74 L71.95 147.98 M81.96 141.52 L80.81 141.90 L80.04 143.04 L79.65 144.94 L79.65 146.08 L80.04 147.98 L80.81 149.12 L81.96 149.50 L82.73 149.50 L83.89 149.12 L84.66 147.98 L85.04 146.08 L85.04 144.94 L84.66 143.04 L83.89 141.90 L82.73 141.52 L81.96 141.52 M92.36 144.18 L91.97 145.32 L91.20 146.08 L90.05 146.46 L89.66 146.46 L88.51 146.08 L87.74 145.32 L87.35 144.18 L87.35 143.80 L87.74 142.66 L88.51 141.90 L89.66 141.52 L90.05 141.52 L91.20 141.90 L91.97 142.66 L92.36 144.18 L92.36 146.08 L91.97 147.98 L91.20 149.12 L90.05 149.50 L89.28 149.50 L88.12 149.12 L87.74 148.36 M95.44 143.42 L95.44 143.04 L95.82 142.28 L96.21 141.90 L96.98 141.52 L98.52 141.52 L99.29 141.90 L99.67 142.28 L100.06 143.04 L100.06 143.80 L99.67 144.56 L98.90 145.70 L95.05 149.50 L100.44 149.50" stroke="#ffffff" stroke-width="1" fill="none"/><path d="M51.93 166.52 L51.16 166.90 L50.39 167.66 L50.01 168.42 L49.62 169.56 L49.62 171.46 L50.01 172.60 L50.39 173.36 L51.16 174.12 L51.93 174.50 L53.47 174.50 L54.24 174.12 L55.01 173.36 L55.40 172.60 L55.78 171.46 L55.78 169.56 L55.40 168.42 L55.01 167.66 L54.24 166.90 L53.47 166.52 L51.93 166.52 M63.48 167.66 L62.71 166.90 L61.56 166.52 L60.02 166.52 L58.86 166.90 L58.09 167.66 L58.09 168.42 L58.48 169.18 L58.86 169.56 L59.63 169.94 L61.94 170.70 L62.71 171.08 L63.10 171.46 L63.48 172.22 L63.48 173.36 L62.71 174.12 L61.56 174.50 L60.02 174.50 L58.86 174.12 L58.09 173.36 M64.64 174.50 L70.80 174.50 M72.72 166.52 L76.96 166.52 L74.65 169.56 L75.80 169.56 L76.57 169.94 L76.96 170.32 L77.34 171.46 L77.34 172.22 L76.96 173.36 L76.19 174.12 L75.03 174.50 L73.88 174.50 L72.72 174.12 L72.34 173.74 L71.95 172.98 M80.42 166.52 L84.66 166.52 L82.35 169.56 L83.50 169.56 L84.27 169.94 L84.66 170.32 L85.04 171.46 L85.04 172.22 L84.66 173.36 L83.89 174.12 L82.73 174.50 L81.58 174.50 L80.42 174.12 L80.04 173.74 L79.65 172.98 M91.20 166.52 L87.35 171.84 L93.13 171.84 M91.20 166.52 L91.20 174.50 M95.44 168.42 L95.44 168.04 L95.82 167.28 L96.21 166.90 L96.98 166.52 L98.52 166.52 L99.29 166.90 L99.67 167.28 L100.06 168.04 L100.06 168.80 L99.67 169.56 L98.90 170.70 L95.05 174.50 L100.44 174.50" stroke="#ffffff" stroke-width="1" fill="none"/><path d="M51.93 192.52 L51.16 192.90 L50.39 193.66 L50.01 194.42 L49.62 195.56 L49.62 197.46 L50.01 198.60 L50.39 199.36 L51.16 200.12 L51.93 200.50 L53.47 200.50 L54.24 200.12 L55.01 199.36 L55.40 198.60 L55.78 197.46 L55.78 195.56 L55.40 194.42 L55.01 193.66 L54.24 192.90 L53.47 192.52 L51.93 192.52 M63.48 193.66 L62.71 192.90 L61.56 192.52 L60.02 192.52 L58.86 192.90 L58.09 193.66 L58.09 194.42 L58.48 195.18 L58.86 195.56 L59.63 195.94 L61.94 196.70 L62.71 197.08 L63.10 197.46 L63.48 198.22 L63.48 199.36 L62.71 200.12 L61.56 200.50 L60.02 200.50 L58.86 200.12 L58.09 199.36 M64.64 200.50 L70.80 200.50 M72.72 192.52 L76.96 192.52 L74.65 195.56 L75.80 195.56 L76.57 195.94 L76.96 196.32 L77.34 197.46 L77.34 198.22 L76.96 199.36 L76.19 200.12 L75.03 200.50 L73.88 200.50 L72.72 200.12 L72.34 199.74 L71.95 198.98 M80.42 192.52 L84.66 192.52 L82.35 195.56 L83.50 195.56 L84.27 195.94 L84.66 196.32 L85.04 197.46 L85.04 198.22 L84.66 199.36 L83.89 200.12 L82.73 200.50 L81.58 200.50 L80.42 200.12 L80.04 199.74 L79.65 198.98 M92.36 193.66 L91.97 192.90 L90.82 192.52 L90.05 192.52 L88.89 192.90 L88.12 194.04 L87.74 195.94 L87.74 197.84 L88.12 199.36 L88.89 200.12 L90.05 200.50 L90.43 200.50 L91.59 200.12 L92.36 199.36 L92.74 198.22 L92.74 197.84 L92.36 196.70 L91.59 195.94 L90.43 195.56 L90.05 195.56 L88.89 195.94 L88.12 196.70 L87.74 197.84 M96.21 194.04 L96.98 193.66 L98.13 192.52 L98.13 200.50" stroke="#ffffff" stroke-width="1" fill="none"/><path d="M51.93 217.52 L51.16 217.90 L50.39 218.66 L50.01 219.42 L49.62 220.56 L49.62 222.46 L50.01 223.60 L50.39 224.36 L51.16 225.12 L51.93 225.50 L53.47 225.50 L54.24 225.12 L55.01 224.36 L55.40 223.60 L55.78 222.46 L55.78 220.56 L55.40 219.42 L55.01 218.66 L54.24 217.90 L53.47 217.52 L51.93 217.52 M63.48 218.66 L62.71 217.90 L61.56 217.52 L60.02 217.52 L58.86 217.90 L58.09 218.66 L58.09 219.42 L58.48 220.18 L58.86 220.56 L59.63 220.94 L61.94 221.70 L62.71 222.08 L63.10 222.46 L63.48 223.22 L63.48 224.36 L62.71 225.12 L61.56 225.50 L60.02 225.50 L58.86 225.12 L58.09 224.36 M64.64 225.50 L70.80 225.50 M72.72 217.52 L76.96 217.52 L74.65 220.56 L75.80 220.56 L76.57 220.94 L76.96 221.32 L77.34 222.46 L77.34 223.22 L76.96 224.36 L76.19 225.12 L75.03 225.50 L73.88 225.50 L72.72 225.12 L72.34 224.74 L71.95 223.98 M80.42 217.52 L84.66 217.52 L82.35 220.56 L83.50 220.56 L84.27 220.94 L84.66 221.32 L85.04 222.46 L85.04 223.22 L84.66 224.36 L83.89 225.12 L82.73 225.50 L81.58 225.50 L80.42 225.12 L80.04 224.74 L79.65 223.98 M89.28 217.52 L88.12 217.90 L87.74 218.66 L87.74 219.42 L88.12 220.18 L88.89 220.56 L90.43 220.94 L91.59 221.32 L92.36 222.08 L92.74 222.84 L92.74 223.98 L92.36 224.74 L91.97 225.12 L90.82 225.50 L89.28 225.50 L88.12 225.12 L87.74 224.74 L87.35 223.98 L87.35 222.84 L87.74 222.08 L88.51 221.32 L89.66 220.94 L91.20 220.56 L91.97 220.18 L92.36 219.42 L92.36 218.66 L91.97 217.90 L90.82 217.52 L89.28 217.52 M100.44 217.52 L96.59 225.50 M95.05 217.52 L100.44 217.52" stroke="#ffffff" stroke-width="1" fill="none"/><path d="M51.93 243.52 L51.16 243.90 L50.39 244.66 L50.01 245.42 L49.62 246.56 L49.62 248.46 L50.01 249.60 L50.39 250.36 L51.16 251.12 L51.93 251.50 L53.47 251.50 L54.24 251.12 L55.01 250.36 L55.40 249.60 L55.78 248.46 L55.78 246.56 L55.40 245.42 L55.01 244.66 L54.24 243.90 L53.47 243.52 L51.93 243.52 M63.48 244.66 L62.71 243.90 L61.56 243.52 L60.02 243.52 L58.86 243.90 L58.09 244.66 L58.09 245.42 L58.48 246.18 L58.86 246.56 L59.63 246.94 L61.94 247.70 L62.71 248.08 L63.10 248.46 L63.48 249.22 L63.48 250.36 L62.71 251.12 L61.56 251.50 L60.02 251.50 L58.86 251.12 L58.09 250.36 M64.64 251.50 L70.80 251.50 M72.72 243.52 L76.96 243.52 L74.65 246.56 L75.80 246.56 L76.57 246.94 L76.96 247.32 L77.34 248.46 L77.34 249.22 L76.96 250.36 L76.19 251.12 L75.03 251.50 L73.88 251.50 L72.72 251.12 L72.34 250.74 L71.95 249.98 M80.42 243.52 L84.66 243.52 L82.35 246.56 L83.50 246.56 L84.27 246.94 L84.66 247.32 L85.04 248.46 L85.04 249.22 L84.66 250.36 L83.89 251.12 L82.73 251.50 L81.58 251.50 L80.42 251.12 L80.04 250.74 L79.65 249.98 M89.28 243.52 L88.12 243.90 L87.74 244.66 L87.74 245.42 L88.12 246.18 L88.89 246.56 L90.43 246.94 L91.59 247.32 L92.36 248.08 L92.74 248.84 L92.74 249.98 L92.36 250.74 L91.97 251.12 L90.82 251.50 L89.28 251.50 L88.12 251.12 L87.74 250.74 L87.35 249.98 L87.35 248.84 L87.74 248.08 L88.51 247.32 L89.66 246.94 L91.20 246.56 L91.97 246.18 L92.36 245.42 L92.36 244.66 L91.97 243.90 L90.82 243.52 L89.28 243.52 M100.06 246.18 L99.67 247.32 L98.90 248.08 L97.75 248.46 L97.36 248.46 L96.21 248.08 L95.44 247.32 L95.05 246.18 L95.05 245.80 L95.44 244.66 L96.21 243.90 L97.36 243.52 L97.75 243.52 L98.90 243.90 L99.67 244.66 L100.06 246.18 L100.06 248.08 L99.67 249.98 L98.90 251.12 L97.75 251.50 L96.98 251.50 L95.82 251.12 L95.44 250.36" stroke="#ffffff" stroke-width="1" fill="none"/><path d="M51.93 268.52 L51.16 268.90 L50.39 269.66 L50.01 270.42 L49.62 271.56 L49.62 273.46 L50.01 274.60 L50.39 275.36 L51.16 276.12 L51.93 276.50 L53.47 276.50 L54.24 276.12 L55.01 275.36 L55.40 274.60 L55.78 273.46 L55.78 271.56 L55.40 270.42 L55.01 269.66 L54.24 268.90 L53.47 268.52 L51.93 268.52 M63.48 269.66 L62.71 268.90 L61.56 268.52 L60.02 268.52 L58.86 268.90 L58.09 269.66 L58.09 270.42 L58.48 271.18 L58.86 271.56 L59.63 271.94 L61.94 272.70 L62.71 273.08 L63.10 273.46 L63.48 274.22 L63.48 275.36 L62.71 276.12 L61.56 276.50 L60.02 276.50 L58.86 276.12 L58.09 275.36 M64.64 276.50 L70.80 276.50 M72.72 268.52 L76.96 268.52 L74.65 271.56 L75.80 271.56 L76.57 271.94 L76.96 272.32 L77.34 273.46 L77.34 274.22 L76.96 275.36 L76.19 276.12 L75.03 276.50 L73.88 276.50 L72.72 276.12 L72.34 275.74 L71.95 274.98 M80.42 268.52 L84.66 268.52 L82.35 271.56 L83.50 271.56 L84.27 271.94 L84.66 272.32 L85.04 273.46 L85.04 274.22 L84.66 275.36 L83.89 276.12 L82.73 276.50 L81.58 276.50 L80.42 276.12 L80.04 275.74 L79.65 274.98 M92.36 271.18 L91.97 272.32 L91.20 273.08 L90.05 273.46 L89.66 273.46 L88.51 273.08 L87.74 272.32 L87.35 271.18 L87.35 270.80 L87.74 269.66 L88.51 268.90 L89.66 268.52 L90.05 268.52 L91.20 268.90 L91.97 269.66 L92.36 271.18 L92.36 273.08 L91.97 274.98 L91.20 276.12 L90.05 276.50 L89.28 276.50 L88.12 276.12 L87.74 275.36 M97.36 268.52 L96.21 268.90 L95.44 270.04 L95.05 271.94 L95.05 273.08 L95.44 274.98 L96.21 276.12 L97.36 276.50 L98.13 276.50 L99.29 276.12 L100.06 274.98 L100.44 273.08 L100.44 271.94 L100.06 270.04 L99.29 268.90 L98.13 268.52 L97.36 268.52" stroke="#ffffff" stroke-width="1" fill="none"/><path d="M51.93 294.52 L51.16 294.90 L50.39 295.66 L50.01 296.42 L49.62 297.56 L49.62 299.46 L50.01 300.60 L50.39 301.36 L51.16 302.12 L51.93 302.50 L53.47 302.50 L54.24 302.12 L55.01 301.36 L55.40 300.60 L55.78 299.46 L55.78 297.56 L55.40 296.42 L55.01 295.66 L54.24 294.90 L53.47 294.52 L51.93 294.52 M63.48 295.66 L62.71 294.90 L61.56 294.52 L60.02 294.52 L58.86 294.90 L58.09 295.66 L58.09 296.42 L58.48 297.18 L58.86 297.56 L59.63 297.94 L61.94 298.70 L62.71 299.08 L63.10 299.46 L63.48 300.22 L63.48 301.36 L62.71 302.12 L61.56 302.50 L60.02 302.50 L58.86 302.12 L58.09 301.36 M64.64 302.50 L70.80 302.50 M72.72 294.52 L76.96 294.52 L74.65 297.56 L75.80 297.56 L76.57 297.94 L76.96 298.32 L77.34 299.46 L77.34 300.22 L76.96 301.36 L76.19 302.12 L75.03 302.50 L73.88 302.50 L72.72 302.12 L72.34 301.74 L71.95 300.98 M83.50 294.52 L79.65 299.84 L85.43 299.84 M83.50 294.52 L83.50 302.50 M89.66 294.52 L88.51 294.90 L87.74 296.04 L87.35 297.94 L87.35 299.08 L87.74 300.98 L88.51 302.12 L89.66 302.50 L90.43 302.50 L91.59 302.12 L92.36 300.98 L92.74 299.08 L92.74 297.94 L92.36 296.04 L91.59 294.90 L90.43 294.52 L89.66 294.52 M99.67 294.52 L95.82 294.52 L95.44 297.94 L95.82 297.56 L96.98 297.18 L98.13 297.18 L99.29 297.56 L100.06 298.32 L100.44 299.46 L100.44 300.22 L100.06 301.36 L99.29 302.12 L98.13 302.50 L96.98 302.50 L95.82 302.12 L95.44 301.74 L95.05 300.98" stroke="#ffffff" stroke-width="1" fill="none"/><path d="M51.93 319.52 L51.16 319.90 L50.39 320.66 L50.01 321.42 L49.62 322.56 L49.62 324.46 L50.01 325.60 L50.39 326.36 L51.16 327.12 L51.93 327.50 L53.47 327.50 L54.24 327.12 L55.01 326.36 L55.40 325.60 L55.78 324.46 L55.78 322.56 L55.40 321.42 L55.01 320.66 L54.24 319.90 L53.47 319.52 L51.93 319.52 M63.48 320.66 L62.71 319.90 L61.56 319.52 L60.02 319.52 L58.86 319.90 L58.09 320.66 L58.09 321.42 L58.48 322.18 L58.86 322.56 L59.63 322.94 L61.94 323.70 L62.71 324.08 L63.10 324.46 L63.48 325.22 L63.48 326.36 L62.71 327.12 L61.56 327.50 L60.02 327.50 L58.86 327.12 L58.09 326.36 M64.64 327.50 L70.80 327.50 M72.72 319.52 L76.96 319.52 L74.65 322.56 L75.80 322.56 L76.57 322.94 L76.96 323.32 L77.34 324.46 L77.34 325.22 L76.96 326.36 L76.19 327.12 L75.03 327.50 L73.88 327.50 L72.72 327.12 L72.34 326.74 L71.95 325.98 M83.50 319.52 L79.65 324.84 L85.43 324.84 M83.50 319.52 L83.50 327.50 M87.74 321.42 L87.74 321.04 L88.12 320.28 L88.51 319.90 L89.28 319.52 L90.82 319.52 L91.59 319.90 L91.97 320.28 L92.36 321.04 L92.36 321.80 L91.97 322.56 L91.20 323.70 L87.35 327.50 L92.74 327.50 M95.44 321.42 L95.44 321.04 L95.82 320.28 L96.21 319.90 L96.98 319.52 L98.52 319.52 L99.29 319.90 L99.67 320.28 L100.06 321.04 L100.06 321.80 L99.67 322.56 L98.90 323.70 L95.05 327.50 L100.44 327.50" stroke="#ffffff" stroke-width="1" fill="none"/><path d="M51.93 345.52 L51.16 345.90 L50.39 346.66 L50.01 347.42 L49.62 348.56 L49.62 350.46 L50.01 351.60 L50.39 352.36 L51.16 353.12 L51.93 353.50 L53.47 353.50 L54.24 353.12 L55.01 352.36 L55.40 351.60 L55.78 350.46 L55.78 348.56 L55.40 347.42 L55.01 346.66 L54.24 345.90 L53.47 345.52 L51.93 345.52 M63.48 346.66 L62.71 345.90 L61.56 345.52 L60.02 345.52 L58.86 345.90 L58.09 346.66 L58.09 347.42 L58.48 348.18 L58.86 348.56 L59.63 348.94 L61.94 349.70 L62.71 350.08 L63.10 350.46 L63.48 351.22 L63.48 352.36 L62.71 353.12 L61.56 353.50 L60.02 353.50 L58.86 353.12 L58.09 352.36 M64.64 353.50 L70.80 353.50 M72.72 345.52 L76.96 345.52 L74.65 348.56 L75.80 348.56 L76.57 348.94 L76.96 349.32 L77.34 350.46 L77.34 351.22 L76.96 352.36 L76.19 353.12 L75.03 353.50 L73.88 353.50 L72.72 353.12 L72.34 352.74 L71.95 351.98 M84.27 345.52 L80.42 345.52 L80.04 348.94 L80.42 348.56 L81.58 348.18 L82.73 348.18 L83.89 348.56 L84.66 349.32 L85.04 350.46 L85.04 351.22 L84.66 352.36 L83.89 353.12 L82.73 353.50 L81.58 353.50 L80.42 353.12 L80.04 352.74 L79.65 351.98 M88.12 345.52 L92.36 345.52 L90.05 348.56 L91.20 348.56 L91.97 348.94 L92.36 349.32 L92.74 350.46 L92.74 351.22 L92.36 352.36 L91.59 353.12 L90.43 353.50 L89.28 353.50 L88.12 353.12 L87.74 352.74 L87.35 351.98 M95.44 347.42 L95.44 347.04 L95.82 346.28 L96.21 345.90 L96.98 345.52 L98.52 345.52 L99.29 345.90 L99.67 346.28 L100.06 347.04 L100.06 347.80 L99.67 348.56 L98.90 349.70 L95.05 353.50 L100.44 353.50" stroke="#ffffff" stroke-width="1" fill="none"/><path d="M51.93 371.52 L51.16 371.90 L50.39 372.66 L50.01 373.42 L49.62 374.56 L49.62 376.46 L50.01 377.60 L50.39 378.36 L51.16 379.12 L51.93 379.50 L53.47 379.50 L54.24 379.12 L55.01 378.36 L55.40 377.60 L55.78 376.46 L55.78 374.56 L55.40 373.42 L55.01 372.66 L54.24 371.90 L53.47 371.52 L51.93 371.52 M63.48 372.66 L62.71 371.90 L61.56 371.52 L60.02 371.52 L58.86 371.90 L58.09 372.66 L58.09 373.42 L58.48 374.18 L58.86 374.56 L59.63 374.94 L61.94 375.70 L62.71 376.08 L63.10 376.46 L63.48 377.22 L63.48 378.36 L62.71 379.12 L61.56 379.50 L60.02 379.50 L58.86 379.12 L58.09 378.36 M64.64 379.50 L70.80 379.50 M72.72 371.52 L76.96 371.52 L74.65 374.56 L75.80 374.56 L76.57 374.94 L76.96 375.32 L77.34 376.46 L77.34 377.22 L76.96 378.36 L76.19 379.12 L75.03 379.50 L73.88 379.50 L72.72 379.12 L72.34 378.74 L71.95 377.98 M84.27 371.52 L80.42 371.52 L80.04 374.94 L80.42 374.56 L81.58 374.18 L82.73 374.18 L83.89 374.56 L84.66 375.32 L85.04 376.46 L85.04 377.22 L84.66 378.36 L83.89 379.12 L82.73 379.50 L81.58 379.50 L80.42 379.12 L80.04 378.74 L79.65 377.98 M92.36 372.66 L91.97 371.90 L90.82 371.52 L90.05 371.52 L88.89 371.90 L88.12 373.04 L87.74 374.94 L87.74 376.84 L88.12 378.36 L88.89 379.12 L90.05 379.50 L90.43 379.50 L91.59 379.12 L92.36 378.36 L92.74 377.22 L92.74 376.84 L92.36 375.70 L91.59 374.94 L90.43 374.56 L90.05 374.56 L88.89 374.94 L88.12 375.70 L87.74 376.84 M96.98 371.52 L95.82 371.90 L95.44 372.66 L95.44 373.42 L95.82 374.18 L96.59 374.56 L98.13 374.94 L99.29 375.32 L100.06 376.08 L100.44 376.84 L100.44 377.98 L100.06 378.74 L99.67 379.12 L98.52 379.50 L96.98 379.50 L95.82 379.12 L95.44 378.74 L95.05 377.98 L95.05 376.84 L95.44 376.08 L96.21 375.32 L97.36 374.94 L98.90 374.56 L99.67 374.18 L100.06 373.42 L100.06 372.66 L99.67 371.90 L98.52 371.52 L96.98 371.52" stroke="#ffffff" stroke-width="1" fill="none"/><path d="M51.93 396.52 L51.16 396.90 L50.39 397.66 L50.01 398.42 L49.62 399.56 L49.62 401.46 L50.01 402.60 L50.39 403.36 L51.16 404.12 L51.93 404.50 L53.47 404.50 L54.24 404.12 L55.01 403.36 L55.40 402.60 L55.78 401.46 L55.78 399.56 L55.40 398.42 L55.01 397.66 L54.24 396.90 L53.47 396.52 L51.93 396.52 M63.48 397.66 L62.71 396.90 L61.56 396.52 L60.02 396.52 L58.86 396.90 L58.09 397.66 L58.09 398.42 L58.48 399.18 L58.86 399.56 L59.63 399.94 L61.94 400.70 L62.71 401.08 L63.10 401.46 L63.48 402.22 L63.48 403.36 L62.71 404.12 L61.56 404.50 L60.02 404.50 L58.86 404.12 L58.09 403.36 M64.64 404.50 L70.80 404.50 M72.72 396.52 L76.96 396.52 L74.65 399.56 L75.80 399.56 L76.57 399.94 L76.96 400.32 L77.34 401.46 L77.34 402.22 L76.96 403.36 L76.19 404.12 L75.03 404.50 L73.88 404.50 L72.72 404.12 L72.34 403.74 L71.95 402.98 M84.27 396.52 L80.42 396.52 L80.04 399.94 L80.42 399.56 L81.58 399.18 L82.73 399.18 L83.89 399.56 L84.66 400.32 L85.04 401.46 L85.04 402.22 L84.66 403.36 L83.89 404.12 L82.73 404.50 L81.58 404.50 L80.42 404.12 L80.04 403.74 L79.65 402.98 M92.74 396.52 L88.89 404.50 M87.35 396.52 L92.74 396.52 M97.36 396.52 L96.21 396.90 L95.44 398.04 L95.05 399.94 L95.05 401.08 L95.44 402.98 L96.21 404.12 L97.36 404.50 L98.13 404.50 L99.29 404.12 L100.06 402.98 L100.44 401.08 L100.44 399.94 L100.06 398.04 L99.29 396.90 L98.13 396.52 L97.36 396.52" stroke="#ffffff" stroke-width="1" fill="none"/><path d="M87.08 425.04 L87.84 424.66 L88.98 423.52 L88.98 431.50 M95.82 423.52 L94.68 423.90 L93.92 425.04 L93.54 426.94 L93.54 428.08 L93.92 429.98 L94.68 431.12 L95.82 431.50 L96.58 431.50 L97.72 431.12 L98.48 429.98 L98.86 428.08 L98.86 426.94 L98.48 425.04 L97.72 423.90 L96.58 423.52 L95.82 423.52 M103.42 423.52 L102.28 423.90 L101.52 425.04 L101.14 426.94 L101.14 428.08 L101.52 429.98 L102.28 431.12 L103.42 431.50 L104.18 431.50 L105.32 431.12 L106.08 429.98 L106.46 428.08 L106.46 426.94 L106.08 425.04 L105.32 423.90 L104.18 423.52 L103.42 423.52" stroke="#ffffff" stroke-width="1" fill="none"/><path d="M95.44 435.52 L94.30 435.90 L93.92 436.66 L93.92 437.42 L94.30 438.18 L95.06 438.56 L96.58 438.94 L97.72 439.32 L98.48 440.08 L98.86 440.84 L98.86 441.98 L98.48 442.74 L98.10 443.12 L96.96 443.50 L95.44 443.50 L94.30 443.12 L93.92 442.74 L93.54 441.98 L93.54 440.84 L93.92 440.08 L94.68 439.32 L95.82 438.94 L97.34 438.56 L98.10 438.18 L98.48 437.42 L98.48 436.66 L98.10 435.90 L96.96 435.52 L95.44 435.52 M103.42 435.52 L102.28 435.90 L101.52 437.04 L101.14 438.94 L101.14 440.08 L101.52 441.98 L102.28 443.12 L103.42 443.50 L104.18 443.50 L105.32 443.12 L106.08 441.98 L106.46 440.08 L106.46 438.94 L106.08 437.04 L105.32 435.90 L104.18 435.52 L103.42 435.52" stroke="#ffffff" stroke-width="1" fill="none"/><path d="M93.92 470.42 L93.92 470.04 L94.30 469.28 L94.68 468.90 L95.44 468.52 L96.96 468.52 L97.72 468.90 L98.10 469.28 L98.48 470.04 L98.48 470.80 L98.10 471.56 L97.34 472.70 L93.54 476.50 L98.86 476.50 M103.42 468.52 L102.28 468.90 L101.52 470.04 L101.14 471.94 L101.14 473.08 L101.52 474.98 L102.28 476.12 L103.42 476.50 L104.18 476.50 L105.32 476.12 L106.08 474.98 L106.46 473.08 L106.46 471.94 L106.08 470.04 L105.32 468.90 L104.18 468.52 L103.42 468.52" stroke="#ffffff" stroke-width="1" fill="none"/><path d="M103.42 480.52 L102.28 480.90 L101.52 482.04 L101.14 483.94 L101.14 485.08 L101.52 486.98 L102.28 488.12 L103.42 488.50 L104.18 488.50 L105.32 488.12 L106.08 486.98 L106.46 485.08 L106.46 483.94 L106.08 482.04 L105.32 480.90 L104.18 480.52 L103.42 480.52" stroke="#ffffff" stroke-width="1" fill="none"/><path d="M8.50 444.52 L8.50 452.50 M8.50 452.50 L13.08 452.50 M16.90 444.52 L13.85 452.50 M16.90 444.52 L19.96 452.50 M14.99 449.84 L18.81 449.84 M26.84 445.66 L26.07 444.90 L24.93 444.52 L23.40 444.52 L22.25 444.90 L21.49 445.66 L21.49 446.42 L21.87 447.18 L22.25 447.56 L23.02 447.94 L25.31 448.70 L26.07 449.08 L26.45 449.46 L26.84 450.22 L26.84 451.36 L26.07 452.12 L24.93 452.50 L23.40 452.50 L22.25 452.12 L21.49 451.36 M34.86 446.42 L34.48 445.66 L33.71 444.90 L32.95 444.52 L31.42 444.52 L30.66 444.90 L29.89 445.66 L29.51 446.42 L29.13 447.56 L29.13 449.46 L29.51 450.60 L29.89 451.36 L30.66 452.12 L31.42 452.50 L32.95 452.50 L33.71 452.12 L34.48 451.36 L34.86 450.60 M39.44 444.52 L38.68 444.90 L37.91 445.66 L37.53 446.42 L37.15 447.56 L37.15 449.46 L37.53 450.60 L37.91 451.36 L38.68 452.12 L39.44 452.50 L40.97 452.50 L41.73 452.12 L42.50 451.36 L42.88 450.60 L43.26 449.46 L43.26 447.56 L42.88 446.42 L42.50 445.66 L41.73 444.90 L40.97 444.52 L39.44 444.52 M45.94 449.08 L52.81 449.08 M55.87 444.52 L55.87 452.50 M55.87 448.32 L56.63 447.56 L57.40 447.18 L58.54 447.18 L59.31 447.56 L60.07 448.32 L60.45 449.46 L60.45 450.22 L60.07 451.36 L59.31 452.12 L58.54 452.50 L57.40 452.50 L56.63 452.12 L55.87 451.36 M63.13 447.18 L63.13 450.98 L63.51 452.12 L64.27 452.50 L65.42 452.50 L66.56 452.12 L67.33 450.98 M67.33 447.18 L67.33 452.50 M72.68 444.52 L71.91 444.52 L71.15 444.90 L70.77 446.04 L70.77 452.50 M69.62 447.18 L72.29 447.18 M77.26 444.52 L76.50 444.52 L75.73 444.90 L75.35 446.04 L75.35 452.50 M74.20 447.18 L76.88 447.18 M79.17 449.46 L83.75 449.46 L83.75 448.70 L83.37 447.94 L82.99 447.56 L82.23 447.18 L81.08 447.18 L80.32 447.56 L79.55 448.32 L79.17 449.46 L79.17 450.22 L79.55 451.36 L80.32 452.12 L81.08 452.50 L82.23 452.50 L82.99 452.12 L83.75 451.36 M86.43 447.18 L86.43 452.50 M86.43 449.46 L86.81 448.32 L87.57 447.56 L88.34 447.18 L89.48 447.18" stroke="#ffffff" stroke-width="1" fill="none"/><path d="M308.88 511.42 L308.88 511.04 L309.26 510.28 L309.65 509.90 L310.41 509.52 L311.94 509.52 L312.70 509.90 L313.08 510.28 L313.47 511.04 L313.47 511.80 L313.08 512.56 L312.32 513.70 L308.50 517.50 L313.85 517.50 M318.43 509.52 L317.29 509.90 L316.52 511.04 L316.14 512.94 L316.14 514.08 L316.52 515.98 L317.29 517.12 L318.43 517.50 L319.20 517.50 L320.34 517.12 L321.11 515.98 L321.49 514.08 L321.49 512.94 L321.11 511.04 L320.34 509.90 L319.20 509.52 L318.43 509.52 M326.07 509.52 L324.93 509.90 L324.16 511.04 L323.78 512.94 L323.78 514.08 L324.16 515.98 L324.93 517.12 L326.07 517.50 L326.84 517.50 L327.98 517.12 L328.75 515.98 L329.13 514.08 L329.13 512.94 L328.75 511.04 L327.98 509.90 L326.84 509.52 L326.07 509.52 M332.18 509.52 L336.39 509.52 L334.09 512.56 L335.24 512.56 L336.00 512.94 L336.39 513.32 L336.77 514.46 L336.77 515.22 L336.39 516.36 L335.62 517.12 L334.48 517.50 L333.33 517.50 L332.18 517.12 L331.80 516.74 L331.42 515.98 M345.55 508.00 L338.68 520.16 M349.76 509.52 L348.61 509.90 L347.85 511.04 L347.46 512.94 L347.46 514.08 L347.85 515.98 L348.61 517.12 L349.76 517.50 L350.52 517.50 L351.67 517.12 L352.43 515.98 L352.81 514.08 L352.81 512.94 L352.43 511.04 L351.67 509.90 L350.52 509.52 L349.76 509.52 M358.92 509.52 L355.10 514.84 L360.83 514.84 M358.92 509.52 L358.92 517.50 M369.24 508.00 L362.36 520.16 M372.29 511.04 L373.06 510.66 L374.20 509.52 L374.20 517.50 M383.37 509.52 L379.55 509.52 L379.17 512.94 L379.55 512.56 L380.70 512.18 L381.84 512.18 L382.99 512.56 L383.75 513.32 L384.14 514.46 L384.14 515.22 L383.75 516.36 L382.99 517.12 L381.84 517.50 L380.70 517.50 L379.55 517.12 L379.17 516.74 L378.79 515.98 M394.83 509.52 L393.69 509.90 L392.92 511.04 L392.54 512.94 L392.54 514.08 L392.92 515.98 L393.69 517.12 L394.83 517.50 L395.60 517.50 L396.74 517.12 L397.51 515.98 L397.89 514.08 L397.89 512.94 L397.51 511.04 L396.74 509.90 L395.60 509.52 L394.83 509.52 M402.47 509.52 L401.33 509.90 L400.56 511.04 L400.18 512.94 L400.18 514.08 L400.56 515.98 L401.33 517.12 L402.47 517.50 L403.24 517.50 L404.38 517.12 L405.15 515.98 L405.53 514.08 L405.53 512.94 L405.15 511.04 L404.38 509.90 L403.24 509.52 L402.47 509.52 M408.58 512.18 L408.20 512.56 L408.58 512.94 L408.97 512.56 L408.58 512.18 M408.58 516.74 L408.20 517.12 L408.58 517.50 L408.97 517.12 L408.58 516.74 M413.93 509.52 L412.79 509.90 L412.02 511.04 L411.64 512.94 L411.64 514.08 L412.02 515.98 L412.79 517.12 L413.93 517.50 L414.70 517.50 L415.84 517.12 L416.61 515.98 L416.99 514.08 L416.99 512.94 L416.61 511.04 L415.84 509.90 L414.70 509.52 L413.93 509.52 M421.57 509.52 L420.43 509.90 L419.66 511.04 L419.28 512.94 L419.28 514.08 L419.66 515.98 L420.43 517.12 L421.57 517.50 L422.34 517.50 L423.48 517.12 L424.25 515.98 L424.63 514.08 L424.63 512.94 L424.25 511.04 L423.48 509.90 L422.34 509.52 L421.57 509.52 M427.68 512.18 L427.30 512.56 L427.68 512.94 L428.07 512.56 L427.68 512.18 M427.68 516.74 L427.30 517.12 L427.68 517.50 L428.07 517.12 L427.68 516.74 M433.03 509.52 L431.89 509.90 L431.12 511.04 L430.74 512.94 L430.74 514.08 L431.12 515.98 L431.89 517.12 L433.03 517.50 L433.80 517.50 L434.94 517.12 L435.71 515.98 L436.09 514.08 L436.09 512.94 L435.71 511.04 L434.94 509.90 L433.80 509.52 L433.03 509.52 M440.67 509.52 L439.53 509.90 L438.76 511.04 L438.38 512.94 L438.38 514.08 L438.76 515.98 L439.53 517.12 L440.67 517.50 L441.44 517.50 L442.58 517.12 L443.35 515.98 L443.73 514.08 L443.73 512.94 L443.35 511.04 L442.58 509.90 L441.44 509.52 L440.67 509.52 M446.78 516.74 L446.40 517.12 L446.78 517.50 L447.17 517.12 L446.78 516.74 M452.13 509.52 L450.99 509.90 L450.22 511.04 L449.84 512.94 L449.84 514.08 L450.22 515.98 L450.99 517.12 L452.13 517.50 L452.90 517.50 L454.04 517.12 L454.81 515.98 L455.19 514.08 L455.19 512.94 L454.81 511.04 L454.04 509.90 L452.90 509.52 L452.13 509.52 M459.77 509.52 L458.63 509.90 L457.86 511.04 L457.48 512.94 L457.48 514.08 L457.86 515.98 L458.63 517.12 L459.77 517.50 L460.54 517.50 L461.68 517.12 L462.45 515.98 L462.83 514.08 L462.83 512.94 L462.45 511.04 L461.68 509.90 L460.54 509.52 L459.77 509.52 M467.41 509.52 L466.27 509.90 L465.50 511.04 L465.12 512.94 L465.12 514.08 L465.50 515.98 L466.27 517.12 L467.41 517.50 L468.18 517.50 L469.32 517.12 L470.09 515.98 L470.47 514.08 L470.47 512.94 L470.09 511.04 L469.32 509.90 L468.18 509.52 L467.41 509.52" stroke="#ffffff" stroke-width="1" fill="none"/><path d="M19.75 514.86 L19.40 514.28 L18.70 513.70 L18.00 513.41 L16.60 513.41 L15.90 513.70 L15.20 514.28 L14.85 514.86 L14.50 515.73 L14.50 517.18 L14.85 518.05 L15.20 518.63 L15.90 519.21 L16.60 519.50 L18.00 519.50 L18.70 519.21 L19.40 518.63 L19.75 518.05 M22.90 514.57 L23.60 514.28 L24.65 513.41 L24.65 519.50" stroke="#ff0000" stroke-width="1" fill="none"/><path d="M40.75 514.86 L40.40 514.28 L39.70 513.70 L39.00 513.41 L37.60 513.41 L36.90 513.70 L36.20 514.28 L35.85 514.86 L35.50 515.73 L35.50 517.18 L35.85 518.05 L36.20 518.63 L36.90 519.21 L37.60 519.50 L39.00 519.50 L39.70 519.21 L40.40 518.63 L40.75 518.05 M43.20 514.86 L43.20 514.57 L43.55 513.99 L43.90 513.70 L44.60 513.41 L46.00 513.41 L46.70 513.70 L47.05 513.99 L47.40 514.57 L47.40 515.15 L47.05 515.73 L46.35 516.60 L42.85 519.50 L47.75 519.50" stroke="#00ff00" stroke-width="1" fill="none"/><path d="M61.75 514.86 L61.40 514.28 L60.70 513.70 L60.00 513.41 L58.60 513.41 L57.90 513.70 L57.20 514.28 L56.85 514.86 L56.50 515.73 L56.50 517.18 L56.85 518.05 L57.20 518.63 L57.90 519.21 L58.60 519.50 L60.00 519.50 L60.70 519.21 L61.40 518.63 L61.75 518.05 M64.55 513.41 L68.40 513.41 L66.30 515.73 L67.35 515.73 L68.05 516.02 L68.40 516.31 L68.75 517.18 L68.75 517.76 L68.40 518.63 L67.70 519.21 L66.65 519.50 L65.60 519.50 L64.55 519.21 L64.20 518.92 L63.85 518.34" stroke="#96e6f8" stroke-width="1" fill="none"/><path d="M77.50 513.41 L77.50 519.50 M77.50 513.41 L82.05 513.41 M77.50 516.31 L80.30 516.31 M77.50 519.50 L82.05 519.50 M84.15 513.41 L84.15 519.50 M88.35 513.41 L88.35 519.50 M85.90 513.41 L90.80 513.41" stroke="#ffff00" stroke-width="1" fill="none"/></svg></body></html>
